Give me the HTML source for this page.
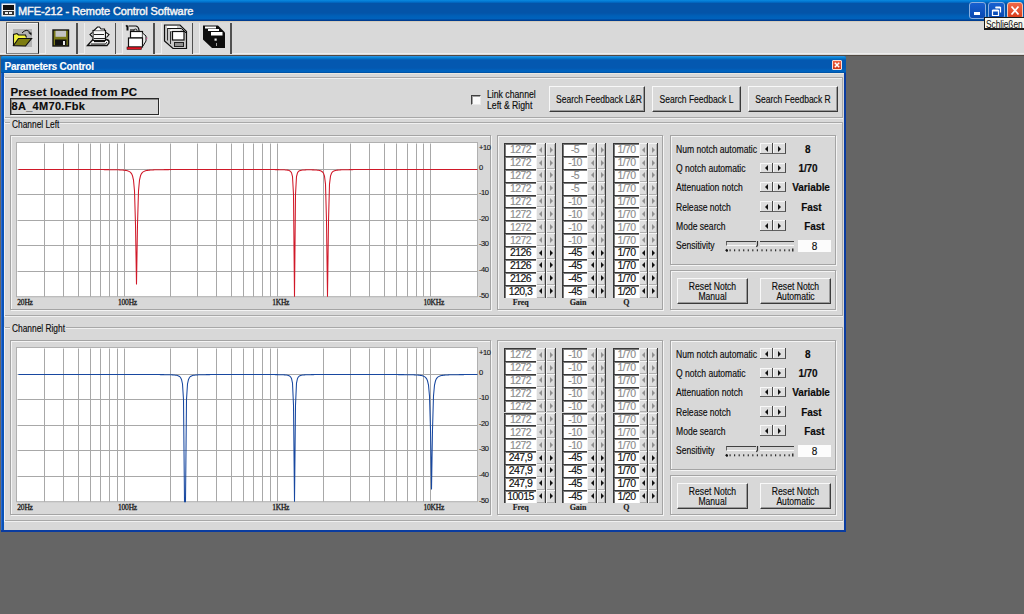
<!DOCTYPE html><html><head><meta charset="utf-8"><style>
*{box-sizing:border-box;margin:0;padding:0}
html,body{width:1024px;height:614px;overflow:hidden;background:#656565;font-family:"Liberation Sans",sans-serif;position:relative}
.abs{position:absolute}
.t{position:absolute;white-space:nowrap;font-size:10px;letter-spacing:-0.7px;color:#0c0c0c;line-height:10px;-webkit-text-stroke:0.15px currentColor}
.b{font-weight:bold}
.etch{position:absolute;border:1px solid #a4a4a4;box-shadow:inset 1px 1px 0 #f4f4f4, 1px 1px 0 #f4f4f4}
.btn{position:absolute;background:#dadada;border:1px solid;border-color:#f8f8f8 #3a3a3a #3a3a3a #f8f8f8;box-shadow:inset -1px -1px 0 #9a9a9a}
.sb{position:absolute;background:#dedede;border-right:1px solid #3c3c3c;box-shadow:inset 1px 1px 0 #f4f4f4, inset -1px -1px 0 #b0b0b0}
.ar{position:absolute;width:0;height:0;border-top:3px solid transparent;border-bottom:3px solid transparent}
</style></head><body>
<div class="abs" style="left:0;top:0;width:1024px;height:21px;background:linear-gradient(#0a8ae0 0px,#0070cc 2px,#0454a8 3.5px,#0454a8 13px,#0060b8 16px,#0062bc 19px,#003c90 20px,#003c90 21px)"></div>
<div class="t" style="left:18px;top:6px;font-size:11px;line-height:11px;color:#f4f4f4;letter-spacing:-0.1px;-webkit-text-stroke:0.45px #f4f4f4">MFE-212 - Remote Control Software</div>
<svg class="abs" style="left:1px;top:3px" width="15" height="14"><rect x="0.5" y="0.5" width="14" height="13" fill="#f0f0f0"/><rect x="2" y="2" width="11" height="5" fill="#111"/><rect x="2" y="8" width="11" height="4" fill="#333"/><rect x="4" y="9" width="3" height="2" fill="#eee"/><rect x="8" y="9" width="3" height="2" fill="#eee"/></svg>
<div class="abs" style="left:969px;top:1.5px;width:17px;height:17px;border:1px solid #8ab0e0;border-radius:3px;background:linear-gradient(#1860d0,#0848b0)"></div>
<div class="abs" style="left:988px;top:1.5px;width:17px;height:17px;border:1px solid #8ab0e0;border-radius:3px;background:linear-gradient(#1860d0,#0848b0)"></div>
<div class="abs" style="left:973.5px;top:12px;width:6px;height:3px;background:#fff"></div>
<svg class="abs" style="left:988px;top:1.5px" width="17" height="17"><path d="M4.5 8.5h6v5h-6z M7.5 5.5h5v5" fill="none" stroke="#fff" stroke-width="1.2"/><path d="M4.5 8.5h6M7.5 5.5h5" stroke="#fff" stroke-width="2"/></svg>
<div class="abs" style="left:1007px;top:1.5px;width:16px;height:17px;border:1px solid #f0c8b8;border-radius:3px;background:linear-gradient(#f06848,#d83c18)"></div>
<svg class="abs" style="left:1007px;top:1.5px" width="16" height="17"><path d="M4.5 4.5L11.5 12.5M11.5 4.5L4.5 12.5" stroke="#fff" stroke-width="1.8"/></svg>
<div class="abs" style="left:0;top:21px;width:1024px;height:34px;background:#d9d9d9;border-top:1px solid #d4ccbc"></div>
<div class="abs" style="left:0;top:53px;width:1024px;height:1px;background:#ececec"></div>
<div class="abs" style="left:0;top:54.5px;width:1024px;height:1px;background:#504840"></div>
<div class="abs" style="left:6px;top:22px;width:33px;height:32px;border:1px solid;border-color:#606060 #202020 #808080 #606060;background:#dedede;box-shadow:inset 1px 1px 0 #f4f4f4"></div>
<div class="abs" style="left:45.0px;top:23px;width:32px;height:31px;background:#dcdcdc;border-left:1px solid #eeeeee"></div>
<div class="abs" style="left:76.0px;top:23px;width:1.5px;height:31px;background:#505050"></div>
<div class="abs" style="left:83.5px;top:23px;width:32px;height:31px;background:#dcdcdc;border-left:1px solid #eeeeee"></div>
<div class="abs" style="left:114.5px;top:23px;width:1.5px;height:31px;background:#505050"></div>
<div class="abs" style="left:122.0px;top:23px;width:32px;height:31px;background:#dcdcdc;border-left:1px solid #eeeeee"></div>
<div class="abs" style="left:153.0px;top:23px;width:1.5px;height:31px;background:#505050"></div>
<div class="abs" style="left:160.5px;top:23px;width:32px;height:31px;background:#dcdcdc;border-left:1px solid #eeeeee"></div>
<div class="abs" style="left:191.5px;top:23px;width:1.5px;height:31px;background:#505050"></div>
<div class="abs" style="left:199.0px;top:23px;width:32px;height:31px;background:#dcdcdc;border-left:1px solid #eeeeee"></div>
<div class="abs" style="left:230.0px;top:23px;width:1.5px;height:31px;background:#505050"></div>
<svg class="abs" style="left:8px;top:24px" width="32" height="28">
<rect x="5" y="5" width="19" height="18" fill="#b4b4b4"/>
<path d="M5.5 21.5V10.5l3.5-1l1.5 1.5h7l1 2.5" fill="#f4f440" stroke="#101010" stroke-width="1.1"/>
<path d="M5.5 21.5L10.5 14.5H23.5L17.5 22z" fill="#7c7c10" stroke="#101010" stroke-width="1.2"/>
<path d="M14 9q4.5-5 8 -0.5" fill="none" stroke="#101010" stroke-width="1"/>
<path d="M20 8.5h3.5v3z" fill="#101010"/>
</svg>
<svg class="abs" style="left:52px;top:29px" width="18" height="18">
<rect x="1" y="1" width="15.5" height="16" fill="#7a7a18" stroke="#101010" stroke-width="1.4"/>
<rect x="3.5" y="1.8" width="10.5" height="6" fill="#c4c4c4"/>
<rect x="3" y="10.5" width="11.5" height="6" fill="#101010"/>
<rect x="11" y="12" width="2" height="4" fill="#e8e8e8"/>
</svg>
<svg class="abs" style="left:84px;top:24px" width="32" height="26">
<path d="M3.5 21.5L9 15.5H22.5q3 0.5 2.5 3.5l-2 2.5z" fill="#fff" stroke="#101010" stroke-width="1.3"/>
<path d="M7 20h14.5l1.5-2" fill="none" stroke="#101010" stroke-width="1"/>
<rect x="9" y="6.5" width="12.5" height="10" fill="#f8f8f8" stroke="#101010" stroke-width="1.2"/>
<path d="M10 6.5l3.5-3.5h2l1.5 2h3.5v1.5" fill="#fff" stroke="#101010" stroke-width="1.1"/>
<path d="M10 10.5h10M10 14.5h11" stroke="#202020" stroke-width="1"/>
<path d="M8.5 8.5l-2.5 2l2.5 2.5M22 8.5l3 2l-2.5 3" fill="#fff" stroke="#101010" stroke-width="1.1"/>
<path d="M10 17.5h11" stroke="#101010" stroke-width="1.3"/>
</svg>
<svg class="abs" style="left:122px;top:22px" width="32" height="30">
<path d="M5.5 3.5v5M4 4.5l1.5-1" stroke="#101010" stroke-width="2"/>
<path d="M7 4h7q2.5 0.5 3 4v1" fill="none" stroke="#101010" stroke-width="1.2"/>
<path d="M8 8h4" stroke="#101010" stroke-width="1.2"/>
<circle cx="13.5" cy="8.5" r="1.5" fill="none" stroke="#101010" stroke-width="1"/>
<rect x="8.5" y="9.5" width="12" height="6.5" fill="#fff" stroke="#101010" stroke-width="1.2"/>
<path d="M20.5 11l3.5 3v5l-3 5" fill="#f0f0f0" stroke="#101010" stroke-width="1"/>
<rect x="6.5" y="16" width="14" height="9" fill="#fff" stroke="#101010" stroke-width="1.2"/>
<rect x="5" y="25" width="14.5" height="2.5" fill="#e01020" stroke="#301010" stroke-width="0.6"/>
<path d="M24 17l1.5-1" stroke="#d0408a" stroke-width="1"/>
</svg>
<svg class="abs" style="left:160px;top:22px" width="32" height="30">
<path d="M4.5 3h15.5l6.5 6.5v17H13L4.5 19z" fill="#c8c8c8" stroke="#101010" stroke-width="1.2"/>
<path d="M8 6.5h13.5l5 5M11.5 9.5h11" fill="none" stroke="#101010" stroke-width="1"/>
<path d="M7.5 4.5v14M10.5 7.5v14.5" stroke="#303030" stroke-width="1"/>
<rect x="7" y="4" width="10" height="2" fill="#fff"/>
<rect x="10" y="7.3" width="10.5" height="2" fill="#fff"/>
<rect x="12.5" y="9.5" width="11.5" height="8.5" fill="#fff" stroke="#101010" stroke-width="1.2"/>
<rect x="14.5" y="20.5" width="9" height="4" fill="#909090" stroke="#202020" stroke-width="1"/>
</svg>
<svg class="abs" style="left:198px;top:22px" width="32" height="30">
<path d="M5 3.5h15l7 7v15.5H14L5 17.5z" fill="#0c0c0c"/>
<rect x="7" y="4.5" width="11" height="2" fill="#fff"/>
<rect x="10" y="7" width="11" height="2" fill="#fff"/>
<rect x="13" y="10" width="11.5" height="3.5" fill="#fff"/>
<rect x="16.5" y="16.5" width="2.2" height="2.2" fill="#f0f0f0"/>
<rect x="18" y="21" width="1" height="3" fill="#a0a0a0"/>
</svg>
<div class="abs" style="left:984px;top:17px;width:45px;height:13px;background:#f8f8f0;border:1px solid #1a1a1a;border-bottom-width:2px"></div>
<div class="t" style="left:986px;top:20px;font-size:10px;letter-spacing:-0.1px;transform:scaleX(0.84);transform-origin:0 0;-webkit-text-stroke:0">Schließen</div>
<div class="abs" style="left:1px;top:55.5px;width:845px;height:476.5px;background:#0852b8;border-radius:2px 2px 0 0"></div>
<div class="abs" style="left:1px;top:55.5px;width:845px;height:17.5px;background:linear-gradient(#3a90e0 0px,#0888d8 1.5px,#0458b0 4px,#0458b0 12px,#0064c0 15px,#0062bc 16px,#003880 17.5px);border-radius:2px 2px 0 0"></div>
<div class="abs" style="left:844px;top:73px;width:2px;height:458px;background:#0a3ca0"></div>
<div class="abs" style="left:1px;top:73px;width:1px;height:458px;background:#2a6ad0"></div>
<div class="abs" style="left:1px;top:530px;width:845px;height:2px;background:#0a3ca0"></div>
<div class="t b" style="left:4.5px;top:61.5px;color:#fff;font-size:10px;letter-spacing:-0.2px">Parameters Control</div>
<div class="abs" style="left:832px;top:60px;width:10px;height:10px;background:linear-gradient(#f06040,#d03818);border:1px solid #f8e0d8;border-radius:1px"></div>
<svg class="abs" style="left:832px;top:60px" width="10" height="10"><path d="M2.8 2.8L7.2 7.2M7.2 2.8L2.8 7.2" stroke="#fff" stroke-width="1.5"/></svg>
<div class="abs" style="left:4px;top:73px;width:840px;height:457px;background:#d8d8d8;border-top:1px solid #ebe8e0"></div>
<div class="abs" style="left:4px;top:77px;width:839px;height:1px;background:#a8a8a8"></div>
<div class="abs" style="left:4px;top:78px;width:839px;height:1px;background:#f0f0f0"></div>
<div class="abs" style="left:842px;top:77px;width:1px;height:40px;background:#a8a8a8"></div>
<div class="abs" style="left:4px;top:117px;width:839px;height:1px;background:#a8a8a8"></div>
<div class="abs" style="left:4px;top:118px;width:839px;height:1px;background:#f0f0f0"></div>
<div class="abs" style="left:4px;top:77px;width:1px;height:41px;background:#f0f0f0"></div>
<div class="t b" style="left:10.5px;top:87px;font-size:11.5px;line-height:11px;letter-spacing:0.16px;color:#0a0a0a">Preset loaded from PC</div>
<div class="abs" style="left:10px;top:98px;width:149px;height:17px;border:1px solid #2a2a2a;box-shadow:inset 1px 1px 0 #8a8a8a, 1px 1px 0 #f4f4f4;background:#d6d6d6"></div>
<div class="t b" style="left:11.5px;top:101px;font-size:11px;line-height:11px;letter-spacing:0.3px;color:#0a0a0a">8A_4M70.Fbk</div>
<div class="abs" style="left:471px;top:94.5px;width:10px;height:10px;background:#fafafa;border:1px solid;border-color:#404040 #e8e8e8 #e8e8e8 #404040;box-shadow:inset 1px 1px 0 #a0a0a0"></div>
<div class="t" style="left:486.5px;top:89.5px;letter-spacing:0;transform:scaleX(0.868);transform-origin:0 0">Link channel</div>
<div class="t" style="left:486.5px;top:100.7px;letter-spacing:0;transform:scaleX(0.868);transform-origin:0 0">Left &amp; Right</div>
<div class="btn" style="left:548.5px;top:86px;width:96px;height:26px"></div>
<div class="t" style="left:548.5px;top:94.5px;width:96px;text-align:center;letter-spacing:0;transform:scaleX(0.853);transform-origin:50% 0">Search Feedback L&amp;R</div>
<div class="btn" style="left:651.5px;top:86px;width:89px;height:26px"></div>
<div class="t" style="left:651.5px;top:94.5px;width:89px;text-align:center;letter-spacing:0;transform:scaleX(0.853);transform-origin:50% 0">Search Feedback L</div>
<div class="btn" style="left:747.5px;top:86px;width:90px;height:26px"></div>
<div class="t" style="left:747.5px;top:94.5px;width:90px;text-align:center;letter-spacing:0;transform:scaleX(0.853);transform-origin:50% 0">Search Feedback R</div>
<div class="abs" style="left:4px;top:122px;width:839px;height:1px;background:#a8a8a8"></div>
<div class="abs" style="left:4px;top:123px;width:839px;height:1px;background:#f0f0f0"></div>
<div class="abs" style="left:4px;top:315px;width:839px;height:1px;background:#a8a8a8"></div>
<div class="abs" style="left:4px;top:316px;width:839px;height:1px;background:#f0f0f0"></div>
<div class="abs" style="left:842px;top:122px;width:1px;height:194px;background:#a8a8a8"></div>
<div class="abs" style="left:4px;top:122px;width:1px;height:195px;background:#f0f0f0"></div>
<div class="abs" style="left:10px;top:118px;width:50px;height:10px;background:#d8d8d8"></div>
<div class="t" style="left:11.5px;top:119.5px;letter-spacing:0;transform:scaleX(0.836);transform-origin:0 0">Channel Left</div>
<div class="etch" style="left:10px;top:135px;width:481px;height:175px"></div>
<svg class="abs" style="left:0;top:0" width="1024" height="614"><rect x="16.5" y="142.5" width="461" height="154.2" fill="#fff" stroke="#b0b0b0" stroke-width="1"/><line x1="44.5" y1="143.5" x2="44.5" y2="296.7" stroke="#a8a8a8" stroke-width="1"/><line x1="63.5" y1="143.5" x2="63.5" y2="296.7" stroke="#a8a8a8" stroke-width="1"/><line x1="78.5" y1="143.5" x2="78.5" y2="296.7" stroke="#a8a8a8" stroke-width="1"/><line x1="90.5" y1="143.5" x2="90.5" y2="296.7" stroke="#a8a8a8" stroke-width="1"/><line x1="100.5" y1="143.5" x2="100.5" y2="296.7" stroke="#a8a8a8" stroke-width="1"/><line x1="109.5" y1="143.5" x2="109.5" y2="296.7" stroke="#a8a8a8" stroke-width="1"/><line x1="117.5" y1="143.5" x2="117.5" y2="296.7" stroke="#a8a8a8" stroke-width="1"/><line x1="124.5" y1="143.5" x2="124.5" y2="296.7" stroke="#a8a8a8" stroke-width="1"/><line x1="170.5" y1="143.5" x2="170.5" y2="296.7" stroke="#a8a8a8" stroke-width="1"/><line x1="197.5" y1="143.5" x2="197.5" y2="296.7" stroke="#a8a8a8" stroke-width="1"/><line x1="216.5" y1="143.5" x2="216.5" y2="296.7" stroke="#a8a8a8" stroke-width="1"/><line x1="231.5" y1="143.5" x2="231.5" y2="296.7" stroke="#a8a8a8" stroke-width="1"/><line x1="243.5" y1="143.5" x2="243.5" y2="296.7" stroke="#a8a8a8" stroke-width="1"/><line x1="253.5" y1="143.5" x2="253.5" y2="296.7" stroke="#a8a8a8" stroke-width="1"/><line x1="262.5" y1="143.5" x2="262.5" y2="296.7" stroke="#a8a8a8" stroke-width="1"/><line x1="270.5" y1="143.5" x2="270.5" y2="296.7" stroke="#a8a8a8" stroke-width="1"/><line x1="277.5" y1="143.5" x2="277.5" y2="296.7" stroke="#a8a8a8" stroke-width="1"/><line x1="323.5" y1="143.5" x2="323.5" y2="296.7" stroke="#a8a8a8" stroke-width="1"/><line x1="350.5" y1="143.5" x2="350.5" y2="296.7" stroke="#a8a8a8" stroke-width="1"/><line x1="369.5" y1="143.5" x2="369.5" y2="296.7" stroke="#a8a8a8" stroke-width="1"/><line x1="384.5" y1="143.5" x2="384.5" y2="296.7" stroke="#a8a8a8" stroke-width="1"/><line x1="396.5" y1="143.5" x2="396.5" y2="296.7" stroke="#a8a8a8" stroke-width="1"/><line x1="407.5" y1="143.5" x2="407.5" y2="296.7" stroke="#a8a8a8" stroke-width="1"/><line x1="416.5" y1="143.5" x2="416.5" y2="296.7" stroke="#a8a8a8" stroke-width="1"/><line x1="423.5" y1="143.5" x2="423.5" y2="296.7" stroke="#a8a8a8" stroke-width="1"/><line x1="430.5" y1="143.5" x2="430.5" y2="296.7" stroke="#a8a8a8" stroke-width="1"/><line x1="17.5" y1="169.5" x2="477.5" y2="169.5" stroke="#a8a8a8" stroke-width="1"/><line x1="17.5" y1="194.5" x2="477.5" y2="194.5" stroke="#a8a8a8" stroke-width="1"/><line x1="17.5" y1="220.5" x2="477.5" y2="220.5" stroke="#a8a8a8" stroke-width="1"/><line x1="17.5" y1="245.5" x2="477.5" y2="245.5" stroke="#a8a8a8" stroke-width="1"/><line x1="17.5" y1="271.5" x2="477.5" y2="271.5" stroke="#a8a8a8" stroke-width="1"/><polyline points="18.50,169.51 19.50,169.51 20.50,169.51 21.50,169.51 22.50,169.51 23.50,169.51 24.50,169.51 25.50,169.51 26.50,169.51 27.50,169.51 28.50,169.51 29.50,169.51 30.50,169.51 31.50,169.51 32.50,169.51 33.50,169.51 34.50,169.51 35.50,169.51 36.50,169.51 37.50,169.51 38.50,169.51 39.50,169.51 40.50,169.51 41.50,169.51 42.50,169.51 43.50,169.51 44.50,169.51 45.50,169.51 46.50,169.51 47.50,169.51 48.50,169.51 49.50,169.52 50.50,169.52 51.50,169.52 52.50,169.52 53.50,169.52 54.50,169.52 55.50,169.52 56.50,169.52 57.50,169.52 58.50,169.52 59.50,169.52 60.50,169.52 61.50,169.52 62.50,169.52 63.50,169.52 64.50,169.52 65.50,169.52 66.50,169.52 67.50,169.52 68.50,169.52 69.50,169.53 70.50,169.53 71.50,169.53 72.50,169.53 73.50,169.53 74.50,169.53 75.50,169.53 76.50,169.53 77.50,169.53 78.50,169.53 79.50,169.53 80.50,169.54 81.50,169.54 82.50,169.54 83.50,169.54 84.50,169.54 85.50,169.54 86.50,169.54 87.50,169.55 88.50,169.55 89.50,169.55 90.50,169.55 91.50,169.55 92.50,169.56 93.50,169.56 94.50,169.56 95.50,169.56 96.50,169.57 97.50,169.57 98.50,169.58 99.50,169.58 100.50,169.58 101.50,169.59 102.50,169.59 103.50,169.60 104.50,169.61 105.50,169.61 106.50,169.62 107.50,169.63 108.50,169.64 109.50,169.65 110.50,169.66 111.50,169.67 112.50,169.69 113.50,169.70 114.50,169.72 115.50,169.74 116.50,169.77 117.50,169.79 118.50,169.83 119.50,169.87 120.50,169.91 121.50,169.97 122.50,170.04 123.50,170.13 124.50,170.23 125.50,170.37 126.50,170.55 127.50,170.80 128.50,171.13 129.50,171.62 130.50,172.37 131.50,173.59 132.50,175.76 133.50,180.18 134.50,191.02 135.50,224.61 136.50,284.40 137.50,224.61 138.50,191.02 139.50,180.18 140.50,175.76 141.50,173.59 142.50,172.37 143.50,171.62 144.50,171.13 145.50,170.80 146.50,170.55 147.50,170.37 148.50,170.23 149.50,170.13 150.50,170.04 151.50,169.97 152.50,169.92 153.50,169.87 154.50,169.83 155.50,169.80 156.50,169.77 157.50,169.74 158.50,169.72 159.50,169.70 160.50,169.69 161.50,169.67 162.50,169.66 163.50,169.65 164.50,169.64 165.50,169.63 166.50,169.62 167.50,169.61 168.50,169.61 169.50,169.60 170.50,169.60 171.50,169.59 172.50,169.59 173.50,169.58 174.50,169.58 175.50,169.57 176.50,169.57 177.50,169.57 178.50,169.56 179.50,169.56 180.50,169.56 181.50,169.56 182.50,169.56 183.50,169.55 184.50,169.55 185.50,169.55 186.50,169.55 187.50,169.55 188.50,169.54 189.50,169.54 190.50,169.54 191.50,169.54 192.50,169.54 193.50,169.54 194.50,169.54 195.50,169.54 196.50,169.54 197.50,169.54 198.50,169.53 199.50,169.53 200.50,169.53 201.50,169.53 202.50,169.53 203.50,169.53 204.50,169.53 205.50,169.53 206.50,169.53 207.50,169.53 208.50,169.53 209.50,169.53 210.50,169.53 211.50,169.53 212.50,169.53 213.50,169.53 214.50,169.53 215.50,169.53 216.50,169.53 217.50,169.53 218.50,169.53 219.50,169.53 220.50,169.53 221.50,169.53 222.50,169.53 223.50,169.53 224.50,169.53 225.50,169.53 226.50,169.53 227.50,169.53 228.50,169.53 229.50,169.53 230.50,169.53 231.50,169.53 232.50,169.53 233.50,169.53 234.50,169.53 235.50,169.53 236.50,169.53 237.50,169.53 238.50,169.53 239.50,169.53 240.50,169.53 241.50,169.53 242.50,169.53 243.50,169.53 244.50,169.53 245.50,169.53 246.50,169.53 247.50,169.53 248.50,169.53 249.50,169.53 250.50,169.53 251.50,169.53 252.50,169.54 253.50,169.54 254.50,169.54 255.50,169.54 256.50,169.54 257.50,169.54 258.50,169.54 259.50,169.54 260.50,169.55 261.50,169.55 262.50,169.55 263.50,169.55 264.50,169.55 265.50,169.56 266.50,169.56 267.50,169.56 268.50,169.57 269.50,169.57 270.50,169.58 271.50,169.58 272.50,169.59 273.50,169.59 274.50,169.60 275.50,169.61 276.50,169.62 277.50,169.63 278.50,169.64 279.50,169.66 280.50,169.68 281.50,169.71 282.50,169.74 283.50,169.78 284.50,169.83 285.50,169.90 286.50,170.00 287.50,170.14 288.50,170.35 289.50,170.71 290.50,171.36 291.50,172.74 292.50,176.56 293.50,194.44 294.50,296.70 295.50,194.45 296.50,176.58 297.50,172.76 298.50,171.39 299.50,170.74 300.50,170.40 301.50,170.19 302.50,170.06 303.50,169.97 304.50,169.91 305.50,169.87 306.50,169.84 307.50,169.83 308.50,169.82 309.50,169.82 310.50,169.83 311.50,169.84 312.50,169.86 313.50,169.89 314.50,169.94 315.50,169.99 316.50,170.07 317.50,170.17 318.50,170.30 319.50,170.50 320.50,170.78 321.50,171.22 322.50,171.96 323.50,173.30 324.50,176.16 325.50,184.09 326.50,221.22 327.50,296.70 328.50,221.22 329.50,184.09 330.50,176.15 331.50,173.28 332.50,171.94 333.50,171.20 334.50,170.76 335.50,170.47 336.50,170.27 337.50,170.13 338.50,170.02 339.50,169.94 340.50,169.88 341.50,169.83 342.50,169.79 343.50,169.75 344.50,169.72 345.50,169.70 346.50,169.68 347.50,169.66 348.50,169.65 349.50,169.64 350.50,169.63 351.50,169.62 352.50,169.61 353.50,169.60 354.50,169.59 355.50,169.59 356.50,169.58 357.50,169.58 358.50,169.57 359.50,169.57 360.50,169.56 361.50,169.56 362.50,169.56 363.50,169.56 364.50,169.55 365.50,169.55 366.50,169.55 367.50,169.55 368.50,169.54 369.50,169.54 370.50,169.54 371.50,169.54 372.50,169.54 373.50,169.54 374.50,169.53 375.50,169.53 376.50,169.53 377.50,169.53 378.50,169.53 379.50,169.53 380.50,169.53 381.50,169.53 382.50,169.53 383.50,169.52 384.50,169.52 385.50,169.52 386.50,169.52 387.50,169.52 388.50,169.52 389.50,169.52 390.50,169.52 391.50,169.52 392.50,169.52 393.50,169.52 394.50,169.52 395.50,169.52 396.50,169.52 397.50,169.52 398.50,169.52 399.50,169.52 400.50,169.52 401.50,169.52 402.50,169.51 403.50,169.51 404.50,169.51 405.50,169.51 406.50,169.51 407.50,169.51 408.50,169.51 409.50,169.51 410.50,169.51 411.50,169.51 412.50,169.51 413.50,169.51 414.50,169.51 415.50,169.51 416.50,169.51 417.50,169.51 418.50,169.51 419.50,169.51 420.50,169.51 421.50,169.51 422.50,169.51 423.50,169.51 424.50,169.51 425.50,169.51 426.50,169.51 427.50,169.51 428.50,169.51 429.50,169.51 430.50,169.51 431.50,169.51 432.50,169.51 433.50,169.51 434.50,169.51 435.50,169.51 436.50,169.51 437.50,169.51 438.50,169.51 439.50,169.51 440.50,169.51 441.50,169.51 442.50,169.51 443.50,169.51 444.50,169.51 445.50,169.51 446.50,169.51 447.50,169.51 448.50,169.51 449.50,169.51 450.50,169.51 451.50,169.51 452.50,169.51 453.50,169.51 454.50,169.51 455.50,169.51 456.50,169.51 457.50,169.51 458.50,169.51 459.50,169.51 460.50,169.51 461.50,169.51 462.50,169.51 463.50,169.51 464.50,169.51 465.50,169.51 466.50,169.51 467.50,169.51 468.50,169.50 469.50,169.50 470.50,169.50 471.50,169.50 472.50,169.50 473.50,169.50 474.50,169.50 475.50,169.50 476.50,169.50 477.50,169.50" fill="none" stroke="#d01828" stroke-width="1.05"/></svg>
<div class="t" style="left:479px;top:144.4px;font-size:7.5px;line-height:7px;letter-spacing:-0.4px;color:#181818">+10</div>
<div class="t" style="left:479px;top:163.9px;font-size:7.5px;line-height:7px;letter-spacing:-0.4px;color:#181818">0</div>
<div class="t" style="left:479px;top:189.3px;font-size:7.5px;line-height:7px;letter-spacing:-0.4px;color:#181818">-10</div>
<div class="t" style="left:479px;top:215.0px;font-size:7.5px;line-height:7px;letter-spacing:-0.4px;color:#181818">-20</div>
<div class="t" style="left:479px;top:240.3px;font-size:7.5px;line-height:7px;letter-spacing:-0.4px;color:#181818">-30</div>
<div class="t" style="left:479px;top:266.0px;font-size:7.5px;line-height:7px;letter-spacing:-0.4px;color:#181818">-40</div>
<div class="t" style="left:479px;top:291.5px;font-size:7.5px;line-height:7px;letter-spacing:-0.4px;color:#181818">-50</div>
<div class="t" style="left:17.3px;width:30px;text-align:left;top:299px;font-size:7.5px;line-height:8px;letter-spacing:-0.2px;color:#202020;font-family:'Liberation Serif';-webkit-text-stroke:0.3px #202020">20Hz</div>
<div class="t" style="left:115.5px;width:24px;text-align:center;top:299px;font-size:7.5px;line-height:8px;letter-spacing:-0.2px;color:#202020;font-family:'Liberation Serif';-webkit-text-stroke:0.3px #202020">100Hz</div>
<div class="t" style="left:268.7px;width:24px;text-align:center;top:299px;font-size:7.5px;line-height:8px;letter-spacing:-0.2px;color:#202020;font-family:'Liberation Serif';-webkit-text-stroke:0.3px #202020">1KHz</div>
<div class="t" style="left:421.8px;width:24px;text-align:center;top:299px;font-size:7.5px;line-height:8px;letter-spacing:-0.2px;color:#202020;font-family:'Liberation Serif';-webkit-text-stroke:0.3px #202020">10KHz</div>
<div class="etch" style="left:497px;top:135px;width:166px;height:175px"></div>
<div class="abs" style="left:504px;top:143.1px;width:31.5px;height:12.9px;background:#fff;border-top:1px solid #383838;border-left:1px solid #383838;box-shadow:inset 1px 1px 0 #7a7a7a"></div>
<div class="t" style="left:505px;top:144.4px;width:31px;text-align:center;color:#8c8c8c;font-size:10.5px;line-height:10px;letter-spacing:-0.55px">1272</div>
<div class="sb" style="left:535.5px;top:143.1px;width:10.0px;height:12.9px"></div>
<div class="ar" style="left:539.0px;top:146.6px;border-right:3px solid #909090"></div>
<div class="sb" style="left:545.5px;top:143.1px;width:10.0px;height:12.9px"></div>
<div class="ar" style="left:549.5px;top:146.6px;border-left:3px solid #909090"></div>
<div class="abs" style="left:561.5px;top:143.1px;width:25.5px;height:12.9px;background:#fff;border-top:1px solid #383838;border-left:1px solid #383838;box-shadow:inset 1px 1px 0 #7a7a7a"></div>
<div class="t" style="left:562.5px;top:144.4px;width:25px;text-align:center;color:#8c8c8c;font-size:10.5px;line-height:10px;letter-spacing:-0.55px">-5</div>
<div class="sb" style="left:587.0px;top:143.1px;width:9.7px;height:12.9px"></div>
<div class="ar" style="left:590.5px;top:146.6px;border-right:3px solid #909090"></div>
<div class="sb" style="left:596.7px;top:143.1px;width:9.7px;height:12.9px"></div>
<div class="ar" style="left:600.7px;top:146.6px;border-left:3px solid #909090"></div>
<div class="abs" style="left:613px;top:143.1px;width:25.5px;height:12.9px;background:#fff;border-top:1px solid #383838;border-left:1px solid #383838;box-shadow:inset 1px 1px 0 #7a7a7a"></div>
<div class="t" style="left:614px;top:144.4px;width:25px;text-align:center;color:#8c8c8c;font-size:10.5px;line-height:10px;letter-spacing:-0.55px">1/70</div>
<div class="sb" style="left:638.5px;top:143.1px;width:9.7px;height:12.9px"></div>
<div class="ar" style="left:642.0px;top:146.6px;border-right:3px solid #909090"></div>
<div class="sb" style="left:648.2px;top:143.1px;width:9.7px;height:12.9px"></div>
<div class="ar" style="left:652.2px;top:146.6px;border-left:3px solid #909090"></div>
<div class="abs" style="left:504px;top:156.0px;width:31.5px;height:12.9px;background:#fff;border-top:1px solid #383838;border-left:1px solid #383838;box-shadow:inset 1px 1px 0 #7a7a7a"></div>
<div class="t" style="left:505px;top:157.3px;width:31px;text-align:center;color:#8c8c8c;font-size:10.5px;line-height:10px;letter-spacing:-0.55px">1272</div>
<div class="sb" style="left:535.5px;top:156.0px;width:10.0px;height:12.9px"></div>
<div class="ar" style="left:539.0px;top:159.5px;border-right:3px solid #909090"></div>
<div class="sb" style="left:545.5px;top:156.0px;width:10.0px;height:12.9px"></div>
<div class="ar" style="left:549.5px;top:159.5px;border-left:3px solid #909090"></div>
<div class="abs" style="left:561.5px;top:156.0px;width:25.5px;height:12.9px;background:#fff;border-top:1px solid #383838;border-left:1px solid #383838;box-shadow:inset 1px 1px 0 #7a7a7a"></div>
<div class="t" style="left:562.5px;top:157.3px;width:25px;text-align:center;color:#8c8c8c;font-size:10.5px;line-height:10px;letter-spacing:-0.55px">-10</div>
<div class="sb" style="left:587.0px;top:156.0px;width:9.7px;height:12.9px"></div>
<div class="ar" style="left:590.5px;top:159.5px;border-right:3px solid #909090"></div>
<div class="sb" style="left:596.7px;top:156.0px;width:9.7px;height:12.9px"></div>
<div class="ar" style="left:600.7px;top:159.5px;border-left:3px solid #909090"></div>
<div class="abs" style="left:613px;top:156.0px;width:25.5px;height:12.9px;background:#fff;border-top:1px solid #383838;border-left:1px solid #383838;box-shadow:inset 1px 1px 0 #7a7a7a"></div>
<div class="t" style="left:614px;top:157.3px;width:25px;text-align:center;color:#8c8c8c;font-size:10.5px;line-height:10px;letter-spacing:-0.55px">1/70</div>
<div class="sb" style="left:638.5px;top:156.0px;width:9.7px;height:12.9px"></div>
<div class="ar" style="left:642.0px;top:159.5px;border-right:3px solid #909090"></div>
<div class="sb" style="left:648.2px;top:156.0px;width:9.7px;height:12.9px"></div>
<div class="ar" style="left:652.2px;top:159.5px;border-left:3px solid #909090"></div>
<div class="abs" style="left:504px;top:168.8px;width:31.5px;height:12.9px;background:#fff;border-top:1px solid #383838;border-left:1px solid #383838;box-shadow:inset 1px 1px 0 #7a7a7a"></div>
<div class="t" style="left:505px;top:170.1px;width:31px;text-align:center;color:#8c8c8c;font-size:10.5px;line-height:10px;letter-spacing:-0.55px">1272</div>
<div class="sb" style="left:535.5px;top:168.8px;width:10.0px;height:12.9px"></div>
<div class="ar" style="left:539.0px;top:172.3px;border-right:3px solid #909090"></div>
<div class="sb" style="left:545.5px;top:168.8px;width:10.0px;height:12.9px"></div>
<div class="ar" style="left:549.5px;top:172.3px;border-left:3px solid #909090"></div>
<div class="abs" style="left:561.5px;top:168.8px;width:25.5px;height:12.9px;background:#fff;border-top:1px solid #383838;border-left:1px solid #383838;box-shadow:inset 1px 1px 0 #7a7a7a"></div>
<div class="t" style="left:562.5px;top:170.1px;width:25px;text-align:center;color:#8c8c8c;font-size:10.5px;line-height:10px;letter-spacing:-0.55px">-5</div>
<div class="sb" style="left:587.0px;top:168.8px;width:9.7px;height:12.9px"></div>
<div class="ar" style="left:590.5px;top:172.3px;border-right:3px solid #909090"></div>
<div class="sb" style="left:596.7px;top:168.8px;width:9.7px;height:12.9px"></div>
<div class="ar" style="left:600.7px;top:172.3px;border-left:3px solid #909090"></div>
<div class="abs" style="left:613px;top:168.8px;width:25.5px;height:12.9px;background:#fff;border-top:1px solid #383838;border-left:1px solid #383838;box-shadow:inset 1px 1px 0 #7a7a7a"></div>
<div class="t" style="left:614px;top:170.1px;width:25px;text-align:center;color:#8c8c8c;font-size:10.5px;line-height:10px;letter-spacing:-0.55px">1/70</div>
<div class="sb" style="left:638.5px;top:168.8px;width:9.7px;height:12.9px"></div>
<div class="ar" style="left:642.0px;top:172.3px;border-right:3px solid #909090"></div>
<div class="sb" style="left:648.2px;top:168.8px;width:9.7px;height:12.9px"></div>
<div class="ar" style="left:652.2px;top:172.3px;border-left:3px solid #909090"></div>
<div class="abs" style="left:504px;top:181.7px;width:31.5px;height:12.9px;background:#fff;border-top:1px solid #383838;border-left:1px solid #383838;box-shadow:inset 1px 1px 0 #7a7a7a"></div>
<div class="t" style="left:505px;top:183.0px;width:31px;text-align:center;color:#8c8c8c;font-size:10.5px;line-height:10px;letter-spacing:-0.55px">1272</div>
<div class="sb" style="left:535.5px;top:181.7px;width:10.0px;height:12.9px"></div>
<div class="ar" style="left:539.0px;top:185.2px;border-right:3px solid #909090"></div>
<div class="sb" style="left:545.5px;top:181.7px;width:10.0px;height:12.9px"></div>
<div class="ar" style="left:549.5px;top:185.2px;border-left:3px solid #909090"></div>
<div class="abs" style="left:561.5px;top:181.7px;width:25.5px;height:12.9px;background:#fff;border-top:1px solid #383838;border-left:1px solid #383838;box-shadow:inset 1px 1px 0 #7a7a7a"></div>
<div class="t" style="left:562.5px;top:183.0px;width:25px;text-align:center;color:#8c8c8c;font-size:10.5px;line-height:10px;letter-spacing:-0.55px">-5</div>
<div class="sb" style="left:587.0px;top:181.7px;width:9.7px;height:12.9px"></div>
<div class="ar" style="left:590.5px;top:185.2px;border-right:3px solid #909090"></div>
<div class="sb" style="left:596.7px;top:181.7px;width:9.7px;height:12.9px"></div>
<div class="ar" style="left:600.7px;top:185.2px;border-left:3px solid #909090"></div>
<div class="abs" style="left:613px;top:181.7px;width:25.5px;height:12.9px;background:#fff;border-top:1px solid #383838;border-left:1px solid #383838;box-shadow:inset 1px 1px 0 #7a7a7a"></div>
<div class="t" style="left:614px;top:183.0px;width:25px;text-align:center;color:#8c8c8c;font-size:10.5px;line-height:10px;letter-spacing:-0.55px">1/70</div>
<div class="sb" style="left:638.5px;top:181.7px;width:9.7px;height:12.9px"></div>
<div class="ar" style="left:642.0px;top:185.2px;border-right:3px solid #909090"></div>
<div class="sb" style="left:648.2px;top:181.7px;width:9.7px;height:12.9px"></div>
<div class="ar" style="left:652.2px;top:185.2px;border-left:3px solid #909090"></div>
<div class="abs" style="left:504px;top:194.6px;width:31.5px;height:12.9px;background:#fff;border-top:1px solid #383838;border-left:1px solid #383838;box-shadow:inset 1px 1px 0 #7a7a7a"></div>
<div class="t" style="left:505px;top:195.9px;width:31px;text-align:center;color:#8c8c8c;font-size:10.5px;line-height:10px;letter-spacing:-0.55px">1272</div>
<div class="sb" style="left:535.5px;top:194.6px;width:10.0px;height:12.9px"></div>
<div class="ar" style="left:539.0px;top:198.1px;border-right:3px solid #909090"></div>
<div class="sb" style="left:545.5px;top:194.6px;width:10.0px;height:12.9px"></div>
<div class="ar" style="left:549.5px;top:198.1px;border-left:3px solid #909090"></div>
<div class="abs" style="left:561.5px;top:194.6px;width:25.5px;height:12.9px;background:#fff;border-top:1px solid #383838;border-left:1px solid #383838;box-shadow:inset 1px 1px 0 #7a7a7a"></div>
<div class="t" style="left:562.5px;top:195.9px;width:25px;text-align:center;color:#8c8c8c;font-size:10.5px;line-height:10px;letter-spacing:-0.55px">-10</div>
<div class="sb" style="left:587.0px;top:194.6px;width:9.7px;height:12.9px"></div>
<div class="ar" style="left:590.5px;top:198.1px;border-right:3px solid #909090"></div>
<div class="sb" style="left:596.7px;top:194.6px;width:9.7px;height:12.9px"></div>
<div class="ar" style="left:600.7px;top:198.1px;border-left:3px solid #909090"></div>
<div class="abs" style="left:613px;top:194.6px;width:25.5px;height:12.9px;background:#fff;border-top:1px solid #383838;border-left:1px solid #383838;box-shadow:inset 1px 1px 0 #7a7a7a"></div>
<div class="t" style="left:614px;top:195.9px;width:25px;text-align:center;color:#8c8c8c;font-size:10.5px;line-height:10px;letter-spacing:-0.55px">1/70</div>
<div class="sb" style="left:638.5px;top:194.6px;width:9.7px;height:12.9px"></div>
<div class="ar" style="left:642.0px;top:198.1px;border-right:3px solid #909090"></div>
<div class="sb" style="left:648.2px;top:194.6px;width:9.7px;height:12.9px"></div>
<div class="ar" style="left:652.2px;top:198.1px;border-left:3px solid #909090"></div>
<div class="abs" style="left:504px;top:207.4px;width:31.5px;height:12.9px;background:#fff;border-top:1px solid #383838;border-left:1px solid #383838;box-shadow:inset 1px 1px 0 #7a7a7a"></div>
<div class="t" style="left:505px;top:208.8px;width:31px;text-align:center;color:#8c8c8c;font-size:10.5px;line-height:10px;letter-spacing:-0.55px">1272</div>
<div class="sb" style="left:535.5px;top:207.4px;width:10.0px;height:12.9px"></div>
<div class="ar" style="left:539.0px;top:210.9px;border-right:3px solid #909090"></div>
<div class="sb" style="left:545.5px;top:207.4px;width:10.0px;height:12.9px"></div>
<div class="ar" style="left:549.5px;top:210.9px;border-left:3px solid #909090"></div>
<div class="abs" style="left:561.5px;top:207.4px;width:25.5px;height:12.9px;background:#fff;border-top:1px solid #383838;border-left:1px solid #383838;box-shadow:inset 1px 1px 0 #7a7a7a"></div>
<div class="t" style="left:562.5px;top:208.8px;width:25px;text-align:center;color:#8c8c8c;font-size:10.5px;line-height:10px;letter-spacing:-0.55px">-10</div>
<div class="sb" style="left:587.0px;top:207.4px;width:9.7px;height:12.9px"></div>
<div class="ar" style="left:590.5px;top:210.9px;border-right:3px solid #909090"></div>
<div class="sb" style="left:596.7px;top:207.4px;width:9.7px;height:12.9px"></div>
<div class="ar" style="left:600.7px;top:210.9px;border-left:3px solid #909090"></div>
<div class="abs" style="left:613px;top:207.4px;width:25.5px;height:12.9px;background:#fff;border-top:1px solid #383838;border-left:1px solid #383838;box-shadow:inset 1px 1px 0 #7a7a7a"></div>
<div class="t" style="left:614px;top:208.8px;width:25px;text-align:center;color:#8c8c8c;font-size:10.5px;line-height:10px;letter-spacing:-0.55px">1/70</div>
<div class="sb" style="left:638.5px;top:207.4px;width:9.7px;height:12.9px"></div>
<div class="ar" style="left:642.0px;top:210.9px;border-right:3px solid #909090"></div>
<div class="sb" style="left:648.2px;top:207.4px;width:9.7px;height:12.9px"></div>
<div class="ar" style="left:652.2px;top:210.9px;border-left:3px solid #909090"></div>
<div class="abs" style="left:504px;top:220.3px;width:31.5px;height:12.9px;background:#fff;border-top:1px solid #383838;border-left:1px solid #383838;box-shadow:inset 1px 1px 0 #7a7a7a"></div>
<div class="t" style="left:505px;top:221.6px;width:31px;text-align:center;color:#8c8c8c;font-size:10.5px;line-height:10px;letter-spacing:-0.55px">1272</div>
<div class="sb" style="left:535.5px;top:220.3px;width:10.0px;height:12.9px"></div>
<div class="ar" style="left:539.0px;top:223.8px;border-right:3px solid #909090"></div>
<div class="sb" style="left:545.5px;top:220.3px;width:10.0px;height:12.9px"></div>
<div class="ar" style="left:549.5px;top:223.8px;border-left:3px solid #909090"></div>
<div class="abs" style="left:561.5px;top:220.3px;width:25.5px;height:12.9px;background:#fff;border-top:1px solid #383838;border-left:1px solid #383838;box-shadow:inset 1px 1px 0 #7a7a7a"></div>
<div class="t" style="left:562.5px;top:221.6px;width:25px;text-align:center;color:#8c8c8c;font-size:10.5px;line-height:10px;letter-spacing:-0.55px">-10</div>
<div class="sb" style="left:587.0px;top:220.3px;width:9.7px;height:12.9px"></div>
<div class="ar" style="left:590.5px;top:223.8px;border-right:3px solid #909090"></div>
<div class="sb" style="left:596.7px;top:220.3px;width:9.7px;height:12.9px"></div>
<div class="ar" style="left:600.7px;top:223.8px;border-left:3px solid #909090"></div>
<div class="abs" style="left:613px;top:220.3px;width:25.5px;height:12.9px;background:#fff;border-top:1px solid #383838;border-left:1px solid #383838;box-shadow:inset 1px 1px 0 #7a7a7a"></div>
<div class="t" style="left:614px;top:221.6px;width:25px;text-align:center;color:#8c8c8c;font-size:10.5px;line-height:10px;letter-spacing:-0.55px">1/70</div>
<div class="sb" style="left:638.5px;top:220.3px;width:9.7px;height:12.9px"></div>
<div class="ar" style="left:642.0px;top:223.8px;border-right:3px solid #909090"></div>
<div class="sb" style="left:648.2px;top:220.3px;width:9.7px;height:12.9px"></div>
<div class="ar" style="left:652.2px;top:223.8px;border-left:3px solid #909090"></div>
<div class="abs" style="left:504px;top:233.2px;width:31.5px;height:12.9px;background:#fff;border-top:1px solid #383838;border-left:1px solid #383838;box-shadow:inset 1px 1px 0 #7a7a7a"></div>
<div class="t" style="left:505px;top:234.5px;width:31px;text-align:center;color:#8c8c8c;font-size:10.5px;line-height:10px;letter-spacing:-0.55px">1272</div>
<div class="sb" style="left:535.5px;top:233.2px;width:10.0px;height:12.9px"></div>
<div class="ar" style="left:539.0px;top:236.7px;border-right:3px solid #909090"></div>
<div class="sb" style="left:545.5px;top:233.2px;width:10.0px;height:12.9px"></div>
<div class="ar" style="left:549.5px;top:236.7px;border-left:3px solid #909090"></div>
<div class="abs" style="left:561.5px;top:233.2px;width:25.5px;height:12.9px;background:#fff;border-top:1px solid #383838;border-left:1px solid #383838;box-shadow:inset 1px 1px 0 #7a7a7a"></div>
<div class="t" style="left:562.5px;top:234.5px;width:25px;text-align:center;color:#8c8c8c;font-size:10.5px;line-height:10px;letter-spacing:-0.55px">-10</div>
<div class="sb" style="left:587.0px;top:233.2px;width:9.7px;height:12.9px"></div>
<div class="ar" style="left:590.5px;top:236.7px;border-right:3px solid #909090"></div>
<div class="sb" style="left:596.7px;top:233.2px;width:9.7px;height:12.9px"></div>
<div class="ar" style="left:600.7px;top:236.7px;border-left:3px solid #909090"></div>
<div class="abs" style="left:613px;top:233.2px;width:25.5px;height:12.9px;background:#fff;border-top:1px solid #383838;border-left:1px solid #383838;box-shadow:inset 1px 1px 0 #7a7a7a"></div>
<div class="t" style="left:614px;top:234.5px;width:25px;text-align:center;color:#8c8c8c;font-size:10.5px;line-height:10px;letter-spacing:-0.55px">1/70</div>
<div class="sb" style="left:638.5px;top:233.2px;width:9.7px;height:12.9px"></div>
<div class="ar" style="left:642.0px;top:236.7px;border-right:3px solid #909090"></div>
<div class="sb" style="left:648.2px;top:233.2px;width:9.7px;height:12.9px"></div>
<div class="ar" style="left:652.2px;top:236.7px;border-left:3px solid #909090"></div>
<div class="abs" style="left:504px;top:246.1px;width:31.5px;height:12.9px;background:#fff;border-top:1px solid #383838;border-left:1px solid #383838;box-shadow:inset 1px 1px 0 #7a7a7a"></div>
<div class="t" style="left:505px;top:247.4px;width:31px;text-align:center;color:#101010;font-size:10.5px;line-height:10px;letter-spacing:-0.55px">2126</div>
<div class="sb" style="left:535.5px;top:246.1px;width:10.0px;height:12.9px"></div>
<div class="ar" style="left:539.0px;top:249.6px;border-right:3px solid #101010"></div>
<div class="sb" style="left:545.5px;top:246.1px;width:10.0px;height:12.9px"></div>
<div class="ar" style="left:549.5px;top:249.6px;border-left:3px solid #101010"></div>
<div class="abs" style="left:561.5px;top:246.1px;width:25.5px;height:12.9px;background:#fff;border-top:1px solid #383838;border-left:1px solid #383838;box-shadow:inset 1px 1px 0 #7a7a7a"></div>
<div class="t" style="left:562.5px;top:247.4px;width:25px;text-align:center;color:#101010;font-size:10.5px;line-height:10px;letter-spacing:-0.55px">-45</div>
<div class="sb" style="left:587.0px;top:246.1px;width:9.7px;height:12.9px"></div>
<div class="ar" style="left:590.5px;top:249.6px;border-right:3px solid #101010"></div>
<div class="sb" style="left:596.7px;top:246.1px;width:9.7px;height:12.9px"></div>
<div class="ar" style="left:600.7px;top:249.6px;border-left:3px solid #101010"></div>
<div class="abs" style="left:613px;top:246.1px;width:25.5px;height:12.9px;background:#fff;border-top:1px solid #383838;border-left:1px solid #383838;box-shadow:inset 1px 1px 0 #7a7a7a"></div>
<div class="t" style="left:614px;top:247.4px;width:25px;text-align:center;color:#101010;font-size:10.5px;line-height:10px;letter-spacing:-0.55px">1/70</div>
<div class="sb" style="left:638.5px;top:246.1px;width:9.7px;height:12.9px"></div>
<div class="ar" style="left:642.0px;top:249.6px;border-right:3px solid #101010"></div>
<div class="sb" style="left:648.2px;top:246.1px;width:9.7px;height:12.9px"></div>
<div class="ar" style="left:652.2px;top:249.6px;border-left:3px solid #101010"></div>
<div class="abs" style="left:504px;top:258.9px;width:31.5px;height:12.9px;background:#fff;border-top:1px solid #383838;border-left:1px solid #383838;box-shadow:inset 1px 1px 0 #7a7a7a"></div>
<div class="t" style="left:505px;top:260.2px;width:31px;text-align:center;color:#101010;font-size:10.5px;line-height:10px;letter-spacing:-0.55px">2126</div>
<div class="sb" style="left:535.5px;top:258.9px;width:10.0px;height:12.9px"></div>
<div class="ar" style="left:539.0px;top:262.4px;border-right:3px solid #101010"></div>
<div class="sb" style="left:545.5px;top:258.9px;width:10.0px;height:12.9px"></div>
<div class="ar" style="left:549.5px;top:262.4px;border-left:3px solid #101010"></div>
<div class="abs" style="left:561.5px;top:258.9px;width:25.5px;height:12.9px;background:#fff;border-top:1px solid #383838;border-left:1px solid #383838;box-shadow:inset 1px 1px 0 #7a7a7a"></div>
<div class="t" style="left:562.5px;top:260.2px;width:25px;text-align:center;color:#101010;font-size:10.5px;line-height:10px;letter-spacing:-0.55px">-45</div>
<div class="sb" style="left:587.0px;top:258.9px;width:9.7px;height:12.9px"></div>
<div class="ar" style="left:590.5px;top:262.4px;border-right:3px solid #101010"></div>
<div class="sb" style="left:596.7px;top:258.9px;width:9.7px;height:12.9px"></div>
<div class="ar" style="left:600.7px;top:262.4px;border-left:3px solid #101010"></div>
<div class="abs" style="left:613px;top:258.9px;width:25.5px;height:12.9px;background:#fff;border-top:1px solid #383838;border-left:1px solid #383838;box-shadow:inset 1px 1px 0 #7a7a7a"></div>
<div class="t" style="left:614px;top:260.2px;width:25px;text-align:center;color:#101010;font-size:10.5px;line-height:10px;letter-spacing:-0.55px">1/70</div>
<div class="sb" style="left:638.5px;top:258.9px;width:9.7px;height:12.9px"></div>
<div class="ar" style="left:642.0px;top:262.4px;border-right:3px solid #101010"></div>
<div class="sb" style="left:648.2px;top:258.9px;width:9.7px;height:12.9px"></div>
<div class="ar" style="left:652.2px;top:262.4px;border-left:3px solid #101010"></div>
<div class="abs" style="left:504px;top:271.8px;width:31.5px;height:12.9px;background:#fff;border-top:1px solid #383838;border-left:1px solid #383838;box-shadow:inset 1px 1px 0 #7a7a7a"></div>
<div class="t" style="left:505px;top:273.1px;width:31px;text-align:center;color:#101010;font-size:10.5px;line-height:10px;letter-spacing:-0.55px">2126</div>
<div class="sb" style="left:535.5px;top:271.8px;width:10.0px;height:12.9px"></div>
<div class="ar" style="left:539.0px;top:275.3px;border-right:3px solid #101010"></div>
<div class="sb" style="left:545.5px;top:271.8px;width:10.0px;height:12.9px"></div>
<div class="ar" style="left:549.5px;top:275.3px;border-left:3px solid #101010"></div>
<div class="abs" style="left:561.5px;top:271.8px;width:25.5px;height:12.9px;background:#fff;border-top:1px solid #383838;border-left:1px solid #383838;box-shadow:inset 1px 1px 0 #7a7a7a"></div>
<div class="t" style="left:562.5px;top:273.1px;width:25px;text-align:center;color:#101010;font-size:10.5px;line-height:10px;letter-spacing:-0.55px">-45</div>
<div class="sb" style="left:587.0px;top:271.8px;width:9.7px;height:12.9px"></div>
<div class="ar" style="left:590.5px;top:275.3px;border-right:3px solid #101010"></div>
<div class="sb" style="left:596.7px;top:271.8px;width:9.7px;height:12.9px"></div>
<div class="ar" style="left:600.7px;top:275.3px;border-left:3px solid #101010"></div>
<div class="abs" style="left:613px;top:271.8px;width:25.5px;height:12.9px;background:#fff;border-top:1px solid #383838;border-left:1px solid #383838;box-shadow:inset 1px 1px 0 #7a7a7a"></div>
<div class="t" style="left:614px;top:273.1px;width:25px;text-align:center;color:#101010;font-size:10.5px;line-height:10px;letter-spacing:-0.55px">1/70</div>
<div class="sb" style="left:638.5px;top:271.8px;width:9.7px;height:12.9px"></div>
<div class="ar" style="left:642.0px;top:275.3px;border-right:3px solid #101010"></div>
<div class="sb" style="left:648.2px;top:271.8px;width:9.7px;height:12.9px"></div>
<div class="ar" style="left:652.2px;top:275.3px;border-left:3px solid #101010"></div>
<div class="abs" style="left:504px;top:284.7px;width:31.5px;height:12.9px;background:#fff;border-top:1px solid #383838;border-left:1px solid #383838;box-shadow:inset 1px 1px 0 #7a7a7a"></div>
<div class="t" style="left:505px;top:286.0px;width:31px;text-align:center;color:#101010;font-size:10.5px;line-height:10px;letter-spacing:-0.55px">120,3</div>
<div class="sb" style="left:535.5px;top:284.7px;width:10.0px;height:12.9px"></div>
<div class="ar" style="left:539.0px;top:288.2px;border-right:3px solid #101010"></div>
<div class="sb" style="left:545.5px;top:284.7px;width:10.0px;height:12.9px"></div>
<div class="ar" style="left:549.5px;top:288.2px;border-left:3px solid #101010"></div>
<div class="abs" style="left:561.5px;top:284.7px;width:25.5px;height:12.9px;background:#fff;border-top:1px solid #383838;border-left:1px solid #383838;box-shadow:inset 1px 1px 0 #7a7a7a"></div>
<div class="t" style="left:562.5px;top:286.0px;width:25px;text-align:center;color:#101010;font-size:10.5px;line-height:10px;letter-spacing:-0.55px">-45</div>
<div class="sb" style="left:587.0px;top:284.7px;width:9.7px;height:12.9px"></div>
<div class="ar" style="left:590.5px;top:288.2px;border-right:3px solid #101010"></div>
<div class="sb" style="left:596.7px;top:284.7px;width:9.7px;height:12.9px"></div>
<div class="ar" style="left:600.7px;top:288.2px;border-left:3px solid #101010"></div>
<div class="abs" style="left:613px;top:284.7px;width:25.5px;height:12.9px;background:#fff;border-top:1px solid #383838;border-left:1px solid #383838;box-shadow:inset 1px 1px 0 #7a7a7a"></div>
<div class="t" style="left:614px;top:286.0px;width:25px;text-align:center;color:#101010;font-size:10.5px;line-height:10px;letter-spacing:-0.55px">1/20</div>
<div class="sb" style="left:638.5px;top:284.7px;width:9.7px;height:12.9px"></div>
<div class="ar" style="left:642.0px;top:288.2px;border-right:3px solid #101010"></div>
<div class="sb" style="left:648.2px;top:284.7px;width:9.7px;height:12.9px"></div>
<div class="ar" style="left:652.2px;top:288.2px;border-left:3px solid #101010"></div>
<div class="t b" style="left:505.70000000000005px;top:298.5px;width:30px;text-align:center;font-size:8px;line-height:8px;letter-spacing:-0.1px;color:#202020;font-family:'Liberation Serif'">Freq</div>
<div class="t b" style="left:563px;top:298.5px;width:30px;text-align:center;font-size:8px;line-height:8px;letter-spacing:-0.1px;color:#202020;font-family:'Liberation Serif'">Gain</div>
<div class="t b" style="left:611.3px;top:298.5px;width:30px;text-align:center;font-size:8px;line-height:8px;letter-spacing:-0.1px;color:#202020;font-family:'Liberation Serif'">Q</div>
<div class="etch" style="left:670px;top:135px;width:166px;height:130px"></div>
<div class="t" style="left:676.4px;top:144.9px;letter-spacing:0;transform:scaleX(0.857);transform-origin:0 0">Num notch automatic</div>
<div class="abs" style="left:760.0px;top:143.4px;width:13px;height:10.5px;background:#dedede;border-right:1.5px solid #484848;border-bottom:1.5px solid #606060;box-shadow:inset 1px 1px 0 #f8f8f8"></div>
<div class="ar" style="left:764.5px;top:145.9px;border-right:3px solid #101010"></div>
<div class="abs" style="left:772.5px;top:143.4px;width:13px;height:10.5px;background:#dedede;border-right:1.5px solid #484848;border-bottom:1.5px solid #606060;box-shadow:inset 1px 1px 0 #f8f8f8"></div>
<div class="ar" style="left:777.5px;top:145.9px;border-left:3px solid #101010"></div>
<div class="t b" style="left:777.8px;top:144.9px;width:60px;text-align:center;font-size:10px;letter-spacing:-0.1px;color:#0a0a0a">8</div>
<div class="t" style="left:676.4px;top:164.1px;letter-spacing:0;transform:scaleX(0.857);transform-origin:0 0">Q notch automatic</div>
<div class="abs" style="left:760.0px;top:162.6px;width:13px;height:10.5px;background:#dedede;border-right:1.5px solid #484848;border-bottom:1.5px solid #606060;box-shadow:inset 1px 1px 0 #f8f8f8"></div>
<div class="ar" style="left:764.5px;top:165.1px;border-right:3px solid #101010"></div>
<div class="abs" style="left:772.5px;top:162.6px;width:13px;height:10.5px;background:#dedede;border-right:1.5px solid #484848;border-bottom:1.5px solid #606060;box-shadow:inset 1px 1px 0 #f8f8f8"></div>
<div class="ar" style="left:777.5px;top:165.1px;border-left:3px solid #101010"></div>
<div class="t b" style="left:778px;top:164.1px;width:60px;text-align:center;font-size:10px;letter-spacing:-0.1px;color:#0a0a0a">1/70</div>
<div class="t" style="left:676.4px;top:183.3px;letter-spacing:0;transform:scaleX(0.857);transform-origin:0 0">Attenuation notch</div>
<div class="abs" style="left:760.0px;top:181.8px;width:13px;height:10.5px;background:#dedede;border-right:1.5px solid #484848;border-bottom:1.5px solid #606060;box-shadow:inset 1px 1px 0 #f8f8f8"></div>
<div class="ar" style="left:764.5px;top:184.3px;border-right:3px solid #101010"></div>
<div class="abs" style="left:772.5px;top:181.8px;width:13px;height:10.5px;background:#dedede;border-right:1.5px solid #484848;border-bottom:1.5px solid #606060;box-shadow:inset 1px 1px 0 #f8f8f8"></div>
<div class="ar" style="left:777.5px;top:184.3px;border-left:3px solid #101010"></div>
<div class="t b" style="left:781px;top:183.3px;width:60px;text-align:center;font-size:10px;letter-spacing:-0.1px;color:#0a0a0a">Variable</div>
<div class="t" style="left:676.4px;top:202.5px;letter-spacing:0;transform:scaleX(0.857);transform-origin:0 0">Release notch</div>
<div class="abs" style="left:760.0px;top:201.0px;width:13px;height:10.5px;background:#dedede;border-right:1.5px solid #484848;border-bottom:1.5px solid #606060;box-shadow:inset 1px 1px 0 #f8f8f8"></div>
<div class="ar" style="left:764.5px;top:203.5px;border-right:3px solid #101010"></div>
<div class="abs" style="left:772.5px;top:201.0px;width:13px;height:10.5px;background:#dedede;border-right:1.5px solid #484848;border-bottom:1.5px solid #606060;box-shadow:inset 1px 1px 0 #f8f8f8"></div>
<div class="ar" style="left:777.5px;top:203.5px;border-left:3px solid #101010"></div>
<div class="t b" style="left:781.3px;top:202.5px;width:60px;text-align:center;font-size:10px;letter-spacing:-0.1px;color:#0a0a0a">Fast</div>
<div class="t" style="left:676.4px;top:221.7px;letter-spacing:0;transform:scaleX(0.857);transform-origin:0 0">Mode search</div>
<div class="abs" style="left:760.0px;top:220.2px;width:13px;height:10.5px;background:#dedede;border-right:1.5px solid #484848;border-bottom:1.5px solid #606060;box-shadow:inset 1px 1px 0 #f8f8f8"></div>
<div class="ar" style="left:764.5px;top:222.7px;border-right:3px solid #101010"></div>
<div class="abs" style="left:772.5px;top:220.2px;width:13px;height:10.5px;background:#dedede;border-right:1.5px solid #484848;border-bottom:1.5px solid #606060;box-shadow:inset 1px 1px 0 #f8f8f8"></div>
<div class="ar" style="left:777.5px;top:222.7px;border-left:3px solid #101010"></div>
<div class="t b" style="left:784.4px;top:221.7px;width:60px;text-align:center;font-size:10px;letter-spacing:-0.1px;color:#0a0a0a">Fast</div>
<div class="t" style="left:676.4px;top:240.9px;letter-spacing:0;transform:scaleX(0.857);transform-origin:0 0">Sensitivity</div>
<div class="abs" style="left:725.5px;top:240.8px;width:68.5px;height:5px;border-top:1.6px solid #404040;border-left:1px solid #606060;border-bottom:1px solid #f8f8f8;background:#d4d4d4"></div>
<svg class="abs" style="left:0;top:0" width="1024" height="614"><rect x="756" y="240" width="4" height="7" fill="#d8d8d8"/><path d="M757.5 241v4l-1 2" fill="none" stroke="#303030" stroke-width="1.2"/></svg>
<svg class="abs" style="left:0;top:0" width="1024" height="614"><rect x="729.5" y="249.3" width="1.2" height="2" fill="#303030"/><rect x="734.0" y="249.3" width="1.2" height="2" fill="#303030"/><rect x="738.6" y="249.3" width="1.2" height="2" fill="#303030"/><rect x="743.1" y="249.3" width="1.2" height="2" fill="#303030"/><rect x="747.7" y="249.3" width="1.2" height="2" fill="#303030"/><rect x="752.2" y="249.3" width="1.2" height="2" fill="#303030"/><rect x="756.8" y="249.3" width="1.2" height="2" fill="#303030"/><rect x="761.4" y="249.3" width="1.2" height="2" fill="#303030"/><rect x="765.9" y="249.3" width="1.2" height="2" fill="#303030"/><rect x="770.5" y="249.3" width="1.2" height="2" fill="#303030"/><rect x="775.0" y="249.3" width="1.2" height="2" fill="#303030"/><rect x="779.5" y="249.3" width="1.2" height="2" fill="#303030"/><rect x="784.1" y="249.3" width="1.2" height="2" fill="#303030"/><rect x="788.6" y="249.3" width="1.2" height="2" fill="#303030"/><path d="M725 250.3l2-1.5v3z" fill="#101010"/><rect x="726" y="249.5" width="2" height="2" fill="#101010"/><rect x="792" y="248.5" width="1.5" height="3" fill="#303030"/></svg>
<div class="abs" style="left:798px;top:240px;width:33px;height:12px;background:#fcfcfc"></div>
<div class="t" style="left:798px;top:241.5px;width:33px;text-align:center;letter-spacing:0;font-size:10px">8</div>
<div class="etch" style="left:670px;top:270px;width:166px;height:40px"></div>
<div class="btn" style="left:676.5px;top:277.5px;width:71px;height:26.5px"></div>
<div class="t" style="left:676.5px;top:281.5px;width:71px;text-align:center;letter-spacing:0;transform:scaleX(0.86);transform-origin:50% 0">Reset Notch</div>
<div class="t" style="left:676.5px;top:291.5px;width:71px;text-align:center;letter-spacing:0;transform:scaleX(0.86);transform-origin:50% 0">Manual</div>
<div class="btn" style="left:760px;top:277.5px;width:71px;height:26.5px"></div>
<div class="t" style="left:760px;top:281.5px;width:71px;text-align:center;letter-spacing:0;transform:scaleX(0.86);transform-origin:50% 0">Reset Notch</div>
<div class="t" style="left:760px;top:291.5px;width:71px;text-align:center;letter-spacing:0;transform:scaleX(0.86);transform-origin:50% 0">Automatic</div>
<div class="abs" style="left:4px;top:327px;width:839px;height:1px;background:#a8a8a8"></div>
<div class="abs" style="left:4px;top:328px;width:839px;height:1px;background:#f0f0f0"></div>
<div class="abs" style="left:4px;top:520px;width:839px;height:1px;background:#a8a8a8"></div>
<div class="abs" style="left:4px;top:521px;width:839px;height:1px;background:#f0f0f0"></div>
<div class="abs" style="left:842px;top:327px;width:1px;height:194px;background:#a8a8a8"></div>
<div class="abs" style="left:4px;top:327px;width:1px;height:195px;background:#f0f0f0"></div>
<div class="abs" style="left:10px;top:323px;width:56px;height:10px;background:#d8d8d8"></div>
<div class="t" style="left:11.5px;top:323.7px;letter-spacing:0;transform:scaleX(0.836);transform-origin:0 0">Channel Right</div>
<div class="etch" style="left:10px;top:340px;width:481px;height:175px"></div>
<svg class="abs" style="left:0;top:0" width="1024" height="614"><rect x="16.5" y="347.5" width="461" height="154.2" fill="#fff" stroke="#b0b0b0" stroke-width="1"/><line x1="44.5" y1="348.5" x2="44.5" y2="501.7" stroke="#a8a8a8" stroke-width="1"/><line x1="63.5" y1="348.5" x2="63.5" y2="501.7" stroke="#a8a8a8" stroke-width="1"/><line x1="78.5" y1="348.5" x2="78.5" y2="501.7" stroke="#a8a8a8" stroke-width="1"/><line x1="90.5" y1="348.5" x2="90.5" y2="501.7" stroke="#a8a8a8" stroke-width="1"/><line x1="100.5" y1="348.5" x2="100.5" y2="501.7" stroke="#a8a8a8" stroke-width="1"/><line x1="109.5" y1="348.5" x2="109.5" y2="501.7" stroke="#a8a8a8" stroke-width="1"/><line x1="117.5" y1="348.5" x2="117.5" y2="501.7" stroke="#a8a8a8" stroke-width="1"/><line x1="124.5" y1="348.5" x2="124.5" y2="501.7" stroke="#a8a8a8" stroke-width="1"/><line x1="170.5" y1="348.5" x2="170.5" y2="501.7" stroke="#a8a8a8" stroke-width="1"/><line x1="197.5" y1="348.5" x2="197.5" y2="501.7" stroke="#a8a8a8" stroke-width="1"/><line x1="216.5" y1="348.5" x2="216.5" y2="501.7" stroke="#a8a8a8" stroke-width="1"/><line x1="231.5" y1="348.5" x2="231.5" y2="501.7" stroke="#a8a8a8" stroke-width="1"/><line x1="243.5" y1="348.5" x2="243.5" y2="501.7" stroke="#a8a8a8" stroke-width="1"/><line x1="253.5" y1="348.5" x2="253.5" y2="501.7" stroke="#a8a8a8" stroke-width="1"/><line x1="262.5" y1="348.5" x2="262.5" y2="501.7" stroke="#a8a8a8" stroke-width="1"/><line x1="270.5" y1="348.5" x2="270.5" y2="501.7" stroke="#a8a8a8" stroke-width="1"/><line x1="277.5" y1="348.5" x2="277.5" y2="501.7" stroke="#a8a8a8" stroke-width="1"/><line x1="323.5" y1="348.5" x2="323.5" y2="501.7" stroke="#a8a8a8" stroke-width="1"/><line x1="350.5" y1="348.5" x2="350.5" y2="501.7" stroke="#a8a8a8" stroke-width="1"/><line x1="369.5" y1="348.5" x2="369.5" y2="501.7" stroke="#a8a8a8" stroke-width="1"/><line x1="384.5" y1="348.5" x2="384.5" y2="501.7" stroke="#a8a8a8" stroke-width="1"/><line x1="396.5" y1="348.5" x2="396.5" y2="501.7" stroke="#a8a8a8" stroke-width="1"/><line x1="407.5" y1="348.5" x2="407.5" y2="501.7" stroke="#a8a8a8" stroke-width="1"/><line x1="416.5" y1="348.5" x2="416.5" y2="501.7" stroke="#a8a8a8" stroke-width="1"/><line x1="423.5" y1="348.5" x2="423.5" y2="501.7" stroke="#a8a8a8" stroke-width="1"/><line x1="430.5" y1="348.5" x2="430.5" y2="501.7" stroke="#a8a8a8" stroke-width="1"/><line x1="17.5" y1="374.5" x2="477.5" y2="374.5" stroke="#a8a8a8" stroke-width="1"/><line x1="17.5" y1="399.5" x2="477.5" y2="399.5" stroke="#a8a8a8" stroke-width="1"/><line x1="17.5" y1="425.5" x2="477.5" y2="425.5" stroke="#a8a8a8" stroke-width="1"/><line x1="17.5" y1="450.5" x2="477.5" y2="450.5" stroke="#a8a8a8" stroke-width="1"/><line x1="17.5" y1="476.5" x2="477.5" y2="476.5" stroke="#a8a8a8" stroke-width="1"/><polyline points="18.50,374.50 19.50,374.50 20.50,374.50 21.50,374.50 22.50,374.50 23.50,374.50 24.50,374.50 25.50,374.50 26.50,374.50 27.50,374.50 28.50,374.50 29.50,374.50 30.50,374.50 31.50,374.50 32.50,374.50 33.50,374.50 34.50,374.50 35.50,374.50 36.50,374.50 37.50,374.50 38.50,374.50 39.50,374.50 40.50,374.50 41.50,374.50 42.50,374.50 43.50,374.50 44.50,374.50 45.50,374.50 46.50,374.50 47.50,374.50 48.50,374.50 49.50,374.50 50.50,374.50 51.50,374.50 52.50,374.50 53.50,374.50 54.50,374.50 55.50,374.51 56.50,374.51 57.50,374.51 58.50,374.51 59.50,374.51 60.50,374.51 61.50,374.51 62.50,374.51 63.50,374.51 64.50,374.51 65.50,374.51 66.50,374.51 67.50,374.51 68.50,374.51 69.50,374.51 70.50,374.51 71.50,374.51 72.50,374.51 73.50,374.51 74.50,374.51 75.50,374.51 76.50,374.51 77.50,374.51 78.50,374.51 79.50,374.51 80.50,374.51 81.50,374.51 82.50,374.51 83.50,374.51 84.50,374.51 85.50,374.51 86.50,374.51 87.50,374.51 88.50,374.51 89.50,374.51 90.50,374.51 91.50,374.51 92.50,374.51 93.50,374.51 94.50,374.51 95.50,374.51 96.50,374.51 97.50,374.51 98.50,374.51 99.50,374.51 100.50,374.51 101.50,374.51 102.50,374.51 103.50,374.51 104.50,374.51 105.50,374.51 106.50,374.51 107.50,374.51 108.50,374.51 109.50,374.51 110.50,374.51 111.50,374.51 112.50,374.51 113.50,374.51 114.50,374.51 115.50,374.51 116.50,374.52 117.50,374.52 118.50,374.52 119.50,374.52 120.50,374.52 121.50,374.52 122.50,374.52 123.50,374.52 124.50,374.52 125.50,374.52 126.50,374.52 127.50,374.52 128.50,374.52 129.50,374.52 130.50,374.52 131.50,374.52 132.50,374.52 133.50,374.53 134.50,374.53 135.50,374.53 136.50,374.53 137.50,374.53 138.50,374.53 139.50,374.53 140.50,374.53 141.50,374.53 142.50,374.54 143.50,374.54 144.50,374.54 145.50,374.54 146.50,374.54 147.50,374.55 148.50,374.55 149.50,374.55 150.50,374.55 151.50,374.56 152.50,374.56 153.50,374.56 154.50,374.57 155.50,374.57 156.50,374.58 157.50,374.58 158.50,374.59 159.50,374.60 160.50,374.60 161.50,374.61 162.50,374.62 163.50,374.64 164.50,374.65 165.50,374.66 166.50,374.68 167.50,374.70 168.50,374.73 169.50,374.76 170.50,374.79 171.50,374.84 172.50,374.89 173.50,374.96 174.50,375.05 175.50,375.18 176.50,375.34 177.50,375.58 178.50,375.94 179.50,376.50 180.50,377.48 181.50,379.40 182.50,383.97 183.50,399.56 184.50,501.70 185.50,501.70 186.50,399.56 187.50,383.97 188.50,379.40 189.50,377.48 190.50,376.50 191.50,375.94 192.50,375.58 193.50,375.34 194.50,375.18 195.50,375.06 196.50,374.96 197.50,374.89 198.50,374.84 199.50,374.79 200.50,374.76 201.50,374.73 202.50,374.70 203.50,374.68 204.50,374.67 205.50,374.65 206.50,374.64 207.50,374.63 208.50,374.62 209.50,374.61 210.50,374.60 211.50,374.59 212.50,374.59 213.50,374.58 214.50,374.58 215.50,374.57 216.50,374.57 217.50,374.57 218.50,374.56 219.50,374.56 220.50,374.56 221.50,374.55 222.50,374.55 223.50,374.55 224.50,374.55 225.50,374.55 226.50,374.55 227.50,374.54 228.50,374.54 229.50,374.54 230.50,374.54 231.50,374.54 232.50,374.54 233.50,374.54 234.50,374.54 235.50,374.54 236.50,374.54 237.50,374.54 238.50,374.54 239.50,374.54 240.50,374.53 241.50,374.53 242.50,374.53 243.50,374.53 244.50,374.53 245.50,374.53 246.50,374.53 247.50,374.54 248.50,374.54 249.50,374.54 250.50,374.54 251.50,374.54 252.50,374.54 253.50,374.54 254.50,374.54 255.50,374.54 256.50,374.54 257.50,374.54 258.50,374.54 259.50,374.54 260.50,374.55 261.50,374.55 262.50,374.55 263.50,374.55 264.50,374.55 265.50,374.56 266.50,374.56 267.50,374.56 268.50,374.57 269.50,374.57 270.50,374.57 271.50,374.58 272.50,374.59 273.50,374.59 274.50,374.60 275.50,374.61 276.50,374.62 277.50,374.64 278.50,374.65 279.50,374.67 280.50,374.69 281.50,374.72 282.50,374.76 283.50,374.81 284.50,374.87 285.50,374.95 286.50,375.07 287.50,375.24 288.50,375.51 289.50,375.94 290.50,376.74 291.50,378.44 292.50,383.14 293.50,405.14 294.50,501.70 295.50,405.14 296.50,383.14 297.50,378.44 298.50,376.74 299.50,375.94 300.50,375.51 301.50,375.24 302.50,375.07 303.50,374.95 304.50,374.87 305.50,374.81 306.50,374.76 307.50,374.72 308.50,374.69 309.50,374.67 310.50,374.65 311.50,374.64 312.50,374.62 313.50,374.61 314.50,374.60 315.50,374.59 316.50,374.59 317.50,374.58 318.50,374.57 319.50,374.57 320.50,374.57 321.50,374.56 322.50,374.56 323.50,374.56 324.50,374.55 325.50,374.55 326.50,374.55 327.50,374.55 328.50,374.54 329.50,374.54 330.50,374.54 331.50,374.54 332.50,374.54 333.50,374.54 334.50,374.54 335.50,374.54 336.50,374.53 337.50,374.53 338.50,374.53 339.50,374.53 340.50,374.53 341.50,374.53 342.50,374.53 343.50,374.53 344.50,374.53 345.50,374.53 346.50,374.53 347.50,374.53 348.50,374.53 349.50,374.53 350.50,374.53 351.50,374.53 352.50,374.53 353.50,374.53 354.50,374.53 355.50,374.53 356.50,374.53 357.50,374.53 358.50,374.53 359.50,374.53 360.50,374.53 361.50,374.53 362.50,374.53 363.50,374.53 364.50,374.53 365.50,374.53 366.50,374.53 367.50,374.53 368.50,374.54 369.50,374.54 370.50,374.54 371.50,374.54 372.50,374.54 373.50,374.54 374.50,374.54 375.50,374.54 376.50,374.54 377.50,374.54 378.50,374.54 379.50,374.55 380.50,374.55 381.50,374.55 382.50,374.55 383.50,374.55 384.50,374.55 385.50,374.56 386.50,374.56 387.50,374.56 388.50,374.56 389.50,374.57 390.50,374.57 391.50,374.57 392.50,374.57 393.50,374.58 394.50,374.58 395.50,374.59 396.50,374.59 397.50,374.60 398.50,374.60 399.50,374.61 400.50,374.61 401.50,374.62 402.50,374.63 403.50,374.64 404.50,374.65 405.50,374.66 406.50,374.67 407.50,374.69 408.50,374.70 409.50,374.72 410.50,374.74 411.50,374.77 412.50,374.80 413.50,374.83 414.50,374.87 415.50,374.92 416.50,374.97 417.50,375.04 418.50,375.13 419.50,375.23 420.50,375.37 421.50,375.55 422.50,375.80 423.50,376.13 424.50,376.62 425.50,377.37 426.50,378.59 427.50,380.76 428.50,385.18 429.50,396.02 430.50,429.61 431.50,489.40 432.50,429.61 433.50,396.02 434.50,385.18 435.50,380.76 436.50,378.59 437.50,377.37 438.50,376.62 439.50,376.13 440.50,375.80 441.50,375.55 442.50,375.37 443.50,375.23 444.50,375.13 445.50,375.04 446.50,374.97 447.50,374.91 448.50,374.87 449.50,374.83 450.50,374.79 451.50,374.77 452.50,374.74 453.50,374.72 454.50,374.70 455.50,374.69 456.50,374.67 457.50,374.66 458.50,374.65 459.50,374.64 460.50,374.63 461.50,374.62 462.50,374.61 463.50,374.61 464.50,374.60 465.50,374.59 466.50,374.59 467.50,374.58 468.50,374.58 469.50,374.58 470.50,374.57 471.50,374.57 472.50,374.56 473.50,374.56 474.50,374.56 475.50,374.56 476.50,374.55 477.50,374.55" fill="none" stroke="#1848a0" stroke-width="1.05"/></svg>
<div class="t" style="left:479px;top:349.4px;font-size:7.5px;line-height:7px;letter-spacing:-0.4px;color:#181818">+10</div>
<div class="t" style="left:479px;top:368.9px;font-size:7.5px;line-height:7px;letter-spacing:-0.4px;color:#181818">0</div>
<div class="t" style="left:479px;top:394.3px;font-size:7.5px;line-height:7px;letter-spacing:-0.4px;color:#181818">-10</div>
<div class="t" style="left:479px;top:420.0px;font-size:7.5px;line-height:7px;letter-spacing:-0.4px;color:#181818">-20</div>
<div class="t" style="left:479px;top:445.3px;font-size:7.5px;line-height:7px;letter-spacing:-0.4px;color:#181818">-30</div>
<div class="t" style="left:479px;top:471.0px;font-size:7.5px;line-height:7px;letter-spacing:-0.4px;color:#181818">-40</div>
<div class="t" style="left:479px;top:496.5px;font-size:7.5px;line-height:7px;letter-spacing:-0.4px;color:#181818">-50</div>
<div class="t" style="left:17.3px;width:30px;text-align:left;top:504px;font-size:7.5px;line-height:8px;letter-spacing:-0.2px;color:#202020;font-family:'Liberation Serif';-webkit-text-stroke:0.3px #202020">20Hz</div>
<div class="t" style="left:115.5px;width:24px;text-align:center;top:504px;font-size:7.5px;line-height:8px;letter-spacing:-0.2px;color:#202020;font-family:'Liberation Serif';-webkit-text-stroke:0.3px #202020">100Hz</div>
<div class="t" style="left:268.7px;width:24px;text-align:center;top:504px;font-size:7.5px;line-height:8px;letter-spacing:-0.2px;color:#202020;font-family:'Liberation Serif';-webkit-text-stroke:0.3px #202020">1KHz</div>
<div class="t" style="left:421.8px;width:24px;text-align:center;top:504px;font-size:7.5px;line-height:8px;letter-spacing:-0.2px;color:#202020;font-family:'Liberation Serif';-webkit-text-stroke:0.3px #202020">10KHz</div>
<div class="etch" style="left:497px;top:340px;width:166px;height:175px"></div>
<div class="abs" style="left:504px;top:348.1px;width:31.5px;height:12.9px;background:#fff;border-top:1px solid #383838;border-left:1px solid #383838;box-shadow:inset 1px 1px 0 #7a7a7a"></div>
<div class="t" style="left:505px;top:349.4px;width:31px;text-align:center;color:#8c8c8c;font-size:10.5px;line-height:10px;letter-spacing:-0.55px">1272</div>
<div class="sb" style="left:535.5px;top:348.1px;width:10.0px;height:12.9px"></div>
<div class="ar" style="left:539.0px;top:351.6px;border-right:3px solid #909090"></div>
<div class="sb" style="left:545.5px;top:348.1px;width:10.0px;height:12.9px"></div>
<div class="ar" style="left:549.5px;top:351.6px;border-left:3px solid #909090"></div>
<div class="abs" style="left:561.5px;top:348.1px;width:25.5px;height:12.9px;background:#fff;border-top:1px solid #383838;border-left:1px solid #383838;box-shadow:inset 1px 1px 0 #7a7a7a"></div>
<div class="t" style="left:562.5px;top:349.4px;width:25px;text-align:center;color:#8c8c8c;font-size:10.5px;line-height:10px;letter-spacing:-0.55px">-10</div>
<div class="sb" style="left:587.0px;top:348.1px;width:9.7px;height:12.9px"></div>
<div class="ar" style="left:590.5px;top:351.6px;border-right:3px solid #909090"></div>
<div class="sb" style="left:596.7px;top:348.1px;width:9.7px;height:12.9px"></div>
<div class="ar" style="left:600.7px;top:351.6px;border-left:3px solid #909090"></div>
<div class="abs" style="left:613px;top:348.1px;width:25.5px;height:12.9px;background:#fff;border-top:1px solid #383838;border-left:1px solid #383838;box-shadow:inset 1px 1px 0 #7a7a7a"></div>
<div class="t" style="left:614px;top:349.4px;width:25px;text-align:center;color:#8c8c8c;font-size:10.5px;line-height:10px;letter-spacing:-0.55px">1/70</div>
<div class="sb" style="left:638.5px;top:348.1px;width:9.7px;height:12.9px"></div>
<div class="ar" style="left:642.0px;top:351.6px;border-right:3px solid #909090"></div>
<div class="sb" style="left:648.2px;top:348.1px;width:9.7px;height:12.9px"></div>
<div class="ar" style="left:652.2px;top:351.6px;border-left:3px solid #909090"></div>
<div class="abs" style="left:504px;top:361.0px;width:31.5px;height:12.9px;background:#fff;border-top:1px solid #383838;border-left:1px solid #383838;box-shadow:inset 1px 1px 0 #7a7a7a"></div>
<div class="t" style="left:505px;top:362.3px;width:31px;text-align:center;color:#8c8c8c;font-size:10.5px;line-height:10px;letter-spacing:-0.55px">1272</div>
<div class="sb" style="left:535.5px;top:361.0px;width:10.0px;height:12.9px"></div>
<div class="ar" style="left:539.0px;top:364.5px;border-right:3px solid #909090"></div>
<div class="sb" style="left:545.5px;top:361.0px;width:10.0px;height:12.9px"></div>
<div class="ar" style="left:549.5px;top:364.5px;border-left:3px solid #909090"></div>
<div class="abs" style="left:561.5px;top:361.0px;width:25.5px;height:12.9px;background:#fff;border-top:1px solid #383838;border-left:1px solid #383838;box-shadow:inset 1px 1px 0 #7a7a7a"></div>
<div class="t" style="left:562.5px;top:362.3px;width:25px;text-align:center;color:#8c8c8c;font-size:10.5px;line-height:10px;letter-spacing:-0.55px">-10</div>
<div class="sb" style="left:587.0px;top:361.0px;width:9.7px;height:12.9px"></div>
<div class="ar" style="left:590.5px;top:364.5px;border-right:3px solid #909090"></div>
<div class="sb" style="left:596.7px;top:361.0px;width:9.7px;height:12.9px"></div>
<div class="ar" style="left:600.7px;top:364.5px;border-left:3px solid #909090"></div>
<div class="abs" style="left:613px;top:361.0px;width:25.5px;height:12.9px;background:#fff;border-top:1px solid #383838;border-left:1px solid #383838;box-shadow:inset 1px 1px 0 #7a7a7a"></div>
<div class="t" style="left:614px;top:362.3px;width:25px;text-align:center;color:#8c8c8c;font-size:10.5px;line-height:10px;letter-spacing:-0.55px">1/70</div>
<div class="sb" style="left:638.5px;top:361.0px;width:9.7px;height:12.9px"></div>
<div class="ar" style="left:642.0px;top:364.5px;border-right:3px solid #909090"></div>
<div class="sb" style="left:648.2px;top:361.0px;width:9.7px;height:12.9px"></div>
<div class="ar" style="left:652.2px;top:364.5px;border-left:3px solid #909090"></div>
<div class="abs" style="left:504px;top:373.8px;width:31.5px;height:12.9px;background:#fff;border-top:1px solid #383838;border-left:1px solid #383838;box-shadow:inset 1px 1px 0 #7a7a7a"></div>
<div class="t" style="left:505px;top:375.1px;width:31px;text-align:center;color:#8c8c8c;font-size:10.5px;line-height:10px;letter-spacing:-0.55px">1272</div>
<div class="sb" style="left:535.5px;top:373.8px;width:10.0px;height:12.9px"></div>
<div class="ar" style="left:539.0px;top:377.3px;border-right:3px solid #909090"></div>
<div class="sb" style="left:545.5px;top:373.8px;width:10.0px;height:12.9px"></div>
<div class="ar" style="left:549.5px;top:377.3px;border-left:3px solid #909090"></div>
<div class="abs" style="left:561.5px;top:373.8px;width:25.5px;height:12.9px;background:#fff;border-top:1px solid #383838;border-left:1px solid #383838;box-shadow:inset 1px 1px 0 #7a7a7a"></div>
<div class="t" style="left:562.5px;top:375.1px;width:25px;text-align:center;color:#8c8c8c;font-size:10.5px;line-height:10px;letter-spacing:-0.55px">-10</div>
<div class="sb" style="left:587.0px;top:373.8px;width:9.7px;height:12.9px"></div>
<div class="ar" style="left:590.5px;top:377.3px;border-right:3px solid #909090"></div>
<div class="sb" style="left:596.7px;top:373.8px;width:9.7px;height:12.9px"></div>
<div class="ar" style="left:600.7px;top:377.3px;border-left:3px solid #909090"></div>
<div class="abs" style="left:613px;top:373.8px;width:25.5px;height:12.9px;background:#fff;border-top:1px solid #383838;border-left:1px solid #383838;box-shadow:inset 1px 1px 0 #7a7a7a"></div>
<div class="t" style="left:614px;top:375.1px;width:25px;text-align:center;color:#8c8c8c;font-size:10.5px;line-height:10px;letter-spacing:-0.55px">1/70</div>
<div class="sb" style="left:638.5px;top:373.8px;width:9.7px;height:12.9px"></div>
<div class="ar" style="left:642.0px;top:377.3px;border-right:3px solid #909090"></div>
<div class="sb" style="left:648.2px;top:373.8px;width:9.7px;height:12.9px"></div>
<div class="ar" style="left:652.2px;top:377.3px;border-left:3px solid #909090"></div>
<div class="abs" style="left:504px;top:386.7px;width:31.5px;height:12.9px;background:#fff;border-top:1px solid #383838;border-left:1px solid #383838;box-shadow:inset 1px 1px 0 #7a7a7a"></div>
<div class="t" style="left:505px;top:388.0px;width:31px;text-align:center;color:#8c8c8c;font-size:10.5px;line-height:10px;letter-spacing:-0.55px">1272</div>
<div class="sb" style="left:535.5px;top:386.7px;width:10.0px;height:12.9px"></div>
<div class="ar" style="left:539.0px;top:390.2px;border-right:3px solid #909090"></div>
<div class="sb" style="left:545.5px;top:386.7px;width:10.0px;height:12.9px"></div>
<div class="ar" style="left:549.5px;top:390.2px;border-left:3px solid #909090"></div>
<div class="abs" style="left:561.5px;top:386.7px;width:25.5px;height:12.9px;background:#fff;border-top:1px solid #383838;border-left:1px solid #383838;box-shadow:inset 1px 1px 0 #7a7a7a"></div>
<div class="t" style="left:562.5px;top:388.0px;width:25px;text-align:center;color:#8c8c8c;font-size:10.5px;line-height:10px;letter-spacing:-0.55px">-10</div>
<div class="sb" style="left:587.0px;top:386.7px;width:9.7px;height:12.9px"></div>
<div class="ar" style="left:590.5px;top:390.2px;border-right:3px solid #909090"></div>
<div class="sb" style="left:596.7px;top:386.7px;width:9.7px;height:12.9px"></div>
<div class="ar" style="left:600.7px;top:390.2px;border-left:3px solid #909090"></div>
<div class="abs" style="left:613px;top:386.7px;width:25.5px;height:12.9px;background:#fff;border-top:1px solid #383838;border-left:1px solid #383838;box-shadow:inset 1px 1px 0 #7a7a7a"></div>
<div class="t" style="left:614px;top:388.0px;width:25px;text-align:center;color:#8c8c8c;font-size:10.5px;line-height:10px;letter-spacing:-0.55px">1/70</div>
<div class="sb" style="left:638.5px;top:386.7px;width:9.7px;height:12.9px"></div>
<div class="ar" style="left:642.0px;top:390.2px;border-right:3px solid #909090"></div>
<div class="sb" style="left:648.2px;top:386.7px;width:9.7px;height:12.9px"></div>
<div class="ar" style="left:652.2px;top:390.2px;border-left:3px solid #909090"></div>
<div class="abs" style="left:504px;top:399.6px;width:31.5px;height:12.9px;background:#fff;border-top:1px solid #383838;border-left:1px solid #383838;box-shadow:inset 1px 1px 0 #7a7a7a"></div>
<div class="t" style="left:505px;top:400.9px;width:31px;text-align:center;color:#8c8c8c;font-size:10.5px;line-height:10px;letter-spacing:-0.55px">1272</div>
<div class="sb" style="left:535.5px;top:399.6px;width:10.0px;height:12.9px"></div>
<div class="ar" style="left:539.0px;top:403.1px;border-right:3px solid #909090"></div>
<div class="sb" style="left:545.5px;top:399.6px;width:10.0px;height:12.9px"></div>
<div class="ar" style="left:549.5px;top:403.1px;border-left:3px solid #909090"></div>
<div class="abs" style="left:561.5px;top:399.6px;width:25.5px;height:12.9px;background:#fff;border-top:1px solid #383838;border-left:1px solid #383838;box-shadow:inset 1px 1px 0 #7a7a7a"></div>
<div class="t" style="left:562.5px;top:400.9px;width:25px;text-align:center;color:#8c8c8c;font-size:10.5px;line-height:10px;letter-spacing:-0.55px">-10</div>
<div class="sb" style="left:587.0px;top:399.6px;width:9.7px;height:12.9px"></div>
<div class="ar" style="left:590.5px;top:403.1px;border-right:3px solid #909090"></div>
<div class="sb" style="left:596.7px;top:399.6px;width:9.7px;height:12.9px"></div>
<div class="ar" style="left:600.7px;top:403.1px;border-left:3px solid #909090"></div>
<div class="abs" style="left:613px;top:399.6px;width:25.5px;height:12.9px;background:#fff;border-top:1px solid #383838;border-left:1px solid #383838;box-shadow:inset 1px 1px 0 #7a7a7a"></div>
<div class="t" style="left:614px;top:400.9px;width:25px;text-align:center;color:#8c8c8c;font-size:10.5px;line-height:10px;letter-spacing:-0.55px">1/70</div>
<div class="sb" style="left:638.5px;top:399.6px;width:9.7px;height:12.9px"></div>
<div class="ar" style="left:642.0px;top:403.1px;border-right:3px solid #909090"></div>
<div class="sb" style="left:648.2px;top:399.6px;width:9.7px;height:12.9px"></div>
<div class="ar" style="left:652.2px;top:403.1px;border-left:3px solid #909090"></div>
<div class="abs" style="left:504px;top:412.5px;width:31.5px;height:12.9px;background:#fff;border-top:1px solid #383838;border-left:1px solid #383838;box-shadow:inset 1px 1px 0 #7a7a7a"></div>
<div class="t" style="left:505px;top:413.8px;width:31px;text-align:center;color:#8c8c8c;font-size:10.5px;line-height:10px;letter-spacing:-0.55px">1272</div>
<div class="sb" style="left:535.5px;top:412.5px;width:10.0px;height:12.9px"></div>
<div class="ar" style="left:539.0px;top:416.0px;border-right:3px solid #909090"></div>
<div class="sb" style="left:545.5px;top:412.5px;width:10.0px;height:12.9px"></div>
<div class="ar" style="left:549.5px;top:416.0px;border-left:3px solid #909090"></div>
<div class="abs" style="left:561.5px;top:412.5px;width:25.5px;height:12.9px;background:#fff;border-top:1px solid #383838;border-left:1px solid #383838;box-shadow:inset 1px 1px 0 #7a7a7a"></div>
<div class="t" style="left:562.5px;top:413.8px;width:25px;text-align:center;color:#8c8c8c;font-size:10.5px;line-height:10px;letter-spacing:-0.55px">-10</div>
<div class="sb" style="left:587.0px;top:412.5px;width:9.7px;height:12.9px"></div>
<div class="ar" style="left:590.5px;top:416.0px;border-right:3px solid #909090"></div>
<div class="sb" style="left:596.7px;top:412.5px;width:9.7px;height:12.9px"></div>
<div class="ar" style="left:600.7px;top:416.0px;border-left:3px solid #909090"></div>
<div class="abs" style="left:613px;top:412.5px;width:25.5px;height:12.9px;background:#fff;border-top:1px solid #383838;border-left:1px solid #383838;box-shadow:inset 1px 1px 0 #7a7a7a"></div>
<div class="t" style="left:614px;top:413.8px;width:25px;text-align:center;color:#8c8c8c;font-size:10.5px;line-height:10px;letter-spacing:-0.55px">1/70</div>
<div class="sb" style="left:638.5px;top:412.5px;width:9.7px;height:12.9px"></div>
<div class="ar" style="left:642.0px;top:416.0px;border-right:3px solid #909090"></div>
<div class="sb" style="left:648.2px;top:412.5px;width:9.7px;height:12.9px"></div>
<div class="ar" style="left:652.2px;top:416.0px;border-left:3px solid #909090"></div>
<div class="abs" style="left:504px;top:425.3px;width:31.5px;height:12.9px;background:#fff;border-top:1px solid #383838;border-left:1px solid #383838;box-shadow:inset 1px 1px 0 #7a7a7a"></div>
<div class="t" style="left:505px;top:426.6px;width:31px;text-align:center;color:#8c8c8c;font-size:10.5px;line-height:10px;letter-spacing:-0.55px">1272</div>
<div class="sb" style="left:535.5px;top:425.3px;width:10.0px;height:12.9px"></div>
<div class="ar" style="left:539.0px;top:428.8px;border-right:3px solid #909090"></div>
<div class="sb" style="left:545.5px;top:425.3px;width:10.0px;height:12.9px"></div>
<div class="ar" style="left:549.5px;top:428.8px;border-left:3px solid #909090"></div>
<div class="abs" style="left:561.5px;top:425.3px;width:25.5px;height:12.9px;background:#fff;border-top:1px solid #383838;border-left:1px solid #383838;box-shadow:inset 1px 1px 0 #7a7a7a"></div>
<div class="t" style="left:562.5px;top:426.6px;width:25px;text-align:center;color:#8c8c8c;font-size:10.5px;line-height:10px;letter-spacing:-0.55px">-10</div>
<div class="sb" style="left:587.0px;top:425.3px;width:9.7px;height:12.9px"></div>
<div class="ar" style="left:590.5px;top:428.8px;border-right:3px solid #909090"></div>
<div class="sb" style="left:596.7px;top:425.3px;width:9.7px;height:12.9px"></div>
<div class="ar" style="left:600.7px;top:428.8px;border-left:3px solid #909090"></div>
<div class="abs" style="left:613px;top:425.3px;width:25.5px;height:12.9px;background:#fff;border-top:1px solid #383838;border-left:1px solid #383838;box-shadow:inset 1px 1px 0 #7a7a7a"></div>
<div class="t" style="left:614px;top:426.6px;width:25px;text-align:center;color:#8c8c8c;font-size:10.5px;line-height:10px;letter-spacing:-0.55px">1/70</div>
<div class="sb" style="left:638.5px;top:425.3px;width:9.7px;height:12.9px"></div>
<div class="ar" style="left:642.0px;top:428.8px;border-right:3px solid #909090"></div>
<div class="sb" style="left:648.2px;top:425.3px;width:9.7px;height:12.9px"></div>
<div class="ar" style="left:652.2px;top:428.8px;border-left:3px solid #909090"></div>
<div class="abs" style="left:504px;top:438.2px;width:31.5px;height:12.9px;background:#fff;border-top:1px solid #383838;border-left:1px solid #383838;box-shadow:inset 1px 1px 0 #7a7a7a"></div>
<div class="t" style="left:505px;top:439.5px;width:31px;text-align:center;color:#8c8c8c;font-size:10.5px;line-height:10px;letter-spacing:-0.55px">1272</div>
<div class="sb" style="left:535.5px;top:438.2px;width:10.0px;height:12.9px"></div>
<div class="ar" style="left:539.0px;top:441.7px;border-right:3px solid #909090"></div>
<div class="sb" style="left:545.5px;top:438.2px;width:10.0px;height:12.9px"></div>
<div class="ar" style="left:549.5px;top:441.7px;border-left:3px solid #909090"></div>
<div class="abs" style="left:561.5px;top:438.2px;width:25.5px;height:12.9px;background:#fff;border-top:1px solid #383838;border-left:1px solid #383838;box-shadow:inset 1px 1px 0 #7a7a7a"></div>
<div class="t" style="left:562.5px;top:439.5px;width:25px;text-align:center;color:#8c8c8c;font-size:10.5px;line-height:10px;letter-spacing:-0.55px">-10</div>
<div class="sb" style="left:587.0px;top:438.2px;width:9.7px;height:12.9px"></div>
<div class="ar" style="left:590.5px;top:441.7px;border-right:3px solid #909090"></div>
<div class="sb" style="left:596.7px;top:438.2px;width:9.7px;height:12.9px"></div>
<div class="ar" style="left:600.7px;top:441.7px;border-left:3px solid #909090"></div>
<div class="abs" style="left:613px;top:438.2px;width:25.5px;height:12.9px;background:#fff;border-top:1px solid #383838;border-left:1px solid #383838;box-shadow:inset 1px 1px 0 #7a7a7a"></div>
<div class="t" style="left:614px;top:439.5px;width:25px;text-align:center;color:#8c8c8c;font-size:10.5px;line-height:10px;letter-spacing:-0.55px">1/70</div>
<div class="sb" style="left:638.5px;top:438.2px;width:9.7px;height:12.9px"></div>
<div class="ar" style="left:642.0px;top:441.7px;border-right:3px solid #909090"></div>
<div class="sb" style="left:648.2px;top:438.2px;width:9.7px;height:12.9px"></div>
<div class="ar" style="left:652.2px;top:441.7px;border-left:3px solid #909090"></div>
<div class="abs" style="left:504px;top:451.1px;width:31.5px;height:12.9px;background:#fff;border-top:1px solid #383838;border-left:1px solid #383838;box-shadow:inset 1px 1px 0 #7a7a7a"></div>
<div class="t" style="left:505px;top:452.4px;width:31px;text-align:center;color:#101010;font-size:10.5px;line-height:10px;letter-spacing:-0.55px">247,9</div>
<div class="sb" style="left:535.5px;top:451.1px;width:10.0px;height:12.9px"></div>
<div class="ar" style="left:539.0px;top:454.6px;border-right:3px solid #101010"></div>
<div class="sb" style="left:545.5px;top:451.1px;width:10.0px;height:12.9px"></div>
<div class="ar" style="left:549.5px;top:454.6px;border-left:3px solid #101010"></div>
<div class="abs" style="left:561.5px;top:451.1px;width:25.5px;height:12.9px;background:#fff;border-top:1px solid #383838;border-left:1px solid #383838;box-shadow:inset 1px 1px 0 #7a7a7a"></div>
<div class="t" style="left:562.5px;top:452.4px;width:25px;text-align:center;color:#101010;font-size:10.5px;line-height:10px;letter-spacing:-0.55px">-45</div>
<div class="sb" style="left:587.0px;top:451.1px;width:9.7px;height:12.9px"></div>
<div class="ar" style="left:590.5px;top:454.6px;border-right:3px solid #101010"></div>
<div class="sb" style="left:596.7px;top:451.1px;width:9.7px;height:12.9px"></div>
<div class="ar" style="left:600.7px;top:454.6px;border-left:3px solid #101010"></div>
<div class="abs" style="left:613px;top:451.1px;width:25.5px;height:12.9px;background:#fff;border-top:1px solid #383838;border-left:1px solid #383838;box-shadow:inset 1px 1px 0 #7a7a7a"></div>
<div class="t" style="left:614px;top:452.4px;width:25px;text-align:center;color:#101010;font-size:10.5px;line-height:10px;letter-spacing:-0.55px">1/70</div>
<div class="sb" style="left:638.5px;top:451.1px;width:9.7px;height:12.9px"></div>
<div class="ar" style="left:642.0px;top:454.6px;border-right:3px solid #101010"></div>
<div class="sb" style="left:648.2px;top:451.1px;width:9.7px;height:12.9px"></div>
<div class="ar" style="left:652.2px;top:454.6px;border-left:3px solid #101010"></div>
<div class="abs" style="left:504px;top:463.9px;width:31.5px;height:12.9px;background:#fff;border-top:1px solid #383838;border-left:1px solid #383838;box-shadow:inset 1px 1px 0 #7a7a7a"></div>
<div class="t" style="left:505px;top:465.2px;width:31px;text-align:center;color:#101010;font-size:10.5px;line-height:10px;letter-spacing:-0.55px">247,9</div>
<div class="sb" style="left:535.5px;top:463.9px;width:10.0px;height:12.9px"></div>
<div class="ar" style="left:539.0px;top:467.4px;border-right:3px solid #101010"></div>
<div class="sb" style="left:545.5px;top:463.9px;width:10.0px;height:12.9px"></div>
<div class="ar" style="left:549.5px;top:467.4px;border-left:3px solid #101010"></div>
<div class="abs" style="left:561.5px;top:463.9px;width:25.5px;height:12.9px;background:#fff;border-top:1px solid #383838;border-left:1px solid #383838;box-shadow:inset 1px 1px 0 #7a7a7a"></div>
<div class="t" style="left:562.5px;top:465.2px;width:25px;text-align:center;color:#101010;font-size:10.5px;line-height:10px;letter-spacing:-0.55px">-45</div>
<div class="sb" style="left:587.0px;top:463.9px;width:9.7px;height:12.9px"></div>
<div class="ar" style="left:590.5px;top:467.4px;border-right:3px solid #101010"></div>
<div class="sb" style="left:596.7px;top:463.9px;width:9.7px;height:12.9px"></div>
<div class="ar" style="left:600.7px;top:467.4px;border-left:3px solid #101010"></div>
<div class="abs" style="left:613px;top:463.9px;width:25.5px;height:12.9px;background:#fff;border-top:1px solid #383838;border-left:1px solid #383838;box-shadow:inset 1px 1px 0 #7a7a7a"></div>
<div class="t" style="left:614px;top:465.2px;width:25px;text-align:center;color:#101010;font-size:10.5px;line-height:10px;letter-spacing:-0.55px">1/70</div>
<div class="sb" style="left:638.5px;top:463.9px;width:9.7px;height:12.9px"></div>
<div class="ar" style="left:642.0px;top:467.4px;border-right:3px solid #101010"></div>
<div class="sb" style="left:648.2px;top:463.9px;width:9.7px;height:12.9px"></div>
<div class="ar" style="left:652.2px;top:467.4px;border-left:3px solid #101010"></div>
<div class="abs" style="left:504px;top:476.8px;width:31.5px;height:12.9px;background:#fff;border-top:1px solid #383838;border-left:1px solid #383838;box-shadow:inset 1px 1px 0 #7a7a7a"></div>
<div class="t" style="left:505px;top:478.1px;width:31px;text-align:center;color:#101010;font-size:10.5px;line-height:10px;letter-spacing:-0.55px">247,9</div>
<div class="sb" style="left:535.5px;top:476.8px;width:10.0px;height:12.9px"></div>
<div class="ar" style="left:539.0px;top:480.3px;border-right:3px solid #101010"></div>
<div class="sb" style="left:545.5px;top:476.8px;width:10.0px;height:12.9px"></div>
<div class="ar" style="left:549.5px;top:480.3px;border-left:3px solid #101010"></div>
<div class="abs" style="left:561.5px;top:476.8px;width:25.5px;height:12.9px;background:#fff;border-top:1px solid #383838;border-left:1px solid #383838;box-shadow:inset 1px 1px 0 #7a7a7a"></div>
<div class="t" style="left:562.5px;top:478.1px;width:25px;text-align:center;color:#101010;font-size:10.5px;line-height:10px;letter-spacing:-0.55px">-45</div>
<div class="sb" style="left:587.0px;top:476.8px;width:9.7px;height:12.9px"></div>
<div class="ar" style="left:590.5px;top:480.3px;border-right:3px solid #101010"></div>
<div class="sb" style="left:596.7px;top:476.8px;width:9.7px;height:12.9px"></div>
<div class="ar" style="left:600.7px;top:480.3px;border-left:3px solid #101010"></div>
<div class="abs" style="left:613px;top:476.8px;width:25.5px;height:12.9px;background:#fff;border-top:1px solid #383838;border-left:1px solid #383838;box-shadow:inset 1px 1px 0 #7a7a7a"></div>
<div class="t" style="left:614px;top:478.1px;width:25px;text-align:center;color:#101010;font-size:10.5px;line-height:10px;letter-spacing:-0.55px">1/70</div>
<div class="sb" style="left:638.5px;top:476.8px;width:9.7px;height:12.9px"></div>
<div class="ar" style="left:642.0px;top:480.3px;border-right:3px solid #101010"></div>
<div class="sb" style="left:648.2px;top:476.8px;width:9.7px;height:12.9px"></div>
<div class="ar" style="left:652.2px;top:480.3px;border-left:3px solid #101010"></div>
<div class="abs" style="left:504px;top:489.7px;width:31.5px;height:12.9px;background:#fff;border-top:1px solid #383838;border-left:1px solid #383838;box-shadow:inset 1px 1px 0 #7a7a7a"></div>
<div class="t" style="left:505px;top:491.0px;width:31px;text-align:center;color:#101010;font-size:10.5px;line-height:10px;letter-spacing:-0.55px">10015</div>
<div class="sb" style="left:535.5px;top:489.7px;width:10.0px;height:12.9px"></div>
<div class="ar" style="left:539.0px;top:493.2px;border-right:3px solid #101010"></div>
<div class="sb" style="left:545.5px;top:489.7px;width:10.0px;height:12.9px"></div>
<div class="ar" style="left:549.5px;top:493.2px;border-left:3px solid #101010"></div>
<div class="abs" style="left:561.5px;top:489.7px;width:25.5px;height:12.9px;background:#fff;border-top:1px solid #383838;border-left:1px solid #383838;box-shadow:inset 1px 1px 0 #7a7a7a"></div>
<div class="t" style="left:562.5px;top:491.0px;width:25px;text-align:center;color:#101010;font-size:10.5px;line-height:10px;letter-spacing:-0.55px">-45</div>
<div class="sb" style="left:587.0px;top:489.7px;width:9.7px;height:12.9px"></div>
<div class="ar" style="left:590.5px;top:493.2px;border-right:3px solid #101010"></div>
<div class="sb" style="left:596.7px;top:489.7px;width:9.7px;height:12.9px"></div>
<div class="ar" style="left:600.7px;top:493.2px;border-left:3px solid #101010"></div>
<div class="abs" style="left:613px;top:489.7px;width:25.5px;height:12.9px;background:#fff;border-top:1px solid #383838;border-left:1px solid #383838;box-shadow:inset 1px 1px 0 #7a7a7a"></div>
<div class="t" style="left:614px;top:491.0px;width:25px;text-align:center;color:#101010;font-size:10.5px;line-height:10px;letter-spacing:-0.55px">1/20</div>
<div class="sb" style="left:638.5px;top:489.7px;width:9.7px;height:12.9px"></div>
<div class="ar" style="left:642.0px;top:493.2px;border-right:3px solid #101010"></div>
<div class="sb" style="left:648.2px;top:489.7px;width:9.7px;height:12.9px"></div>
<div class="ar" style="left:652.2px;top:493.2px;border-left:3px solid #101010"></div>
<div class="t b" style="left:505.70000000000005px;top:503.5px;width:30px;text-align:center;font-size:8px;line-height:8px;letter-spacing:-0.1px;color:#202020;font-family:'Liberation Serif'">Freq</div>
<div class="t b" style="left:563px;top:503.5px;width:30px;text-align:center;font-size:8px;line-height:8px;letter-spacing:-0.1px;color:#202020;font-family:'Liberation Serif'">Gain</div>
<div class="t b" style="left:611.3px;top:503.5px;width:30px;text-align:center;font-size:8px;line-height:8px;letter-spacing:-0.1px;color:#202020;font-family:'Liberation Serif'">Q</div>
<div class="etch" style="left:670px;top:340px;width:166px;height:130px"></div>
<div class="t" style="left:676.4px;top:349.9px;letter-spacing:0;transform:scaleX(0.857);transform-origin:0 0">Num notch automatic</div>
<div class="abs" style="left:760.0px;top:348.4px;width:13px;height:10.5px;background:#dedede;border-right:1.5px solid #484848;border-bottom:1.5px solid #606060;box-shadow:inset 1px 1px 0 #f8f8f8"></div>
<div class="ar" style="left:764.5px;top:350.9px;border-right:3px solid #101010"></div>
<div class="abs" style="left:772.5px;top:348.4px;width:13px;height:10.5px;background:#dedede;border-right:1.5px solid #484848;border-bottom:1.5px solid #606060;box-shadow:inset 1px 1px 0 #f8f8f8"></div>
<div class="ar" style="left:777.5px;top:350.9px;border-left:3px solid #101010"></div>
<div class="t b" style="left:777.8px;top:349.9px;width:60px;text-align:center;font-size:10px;letter-spacing:-0.1px;color:#0a0a0a">8</div>
<div class="t" style="left:676.4px;top:369.1px;letter-spacing:0;transform:scaleX(0.857);transform-origin:0 0">Q notch automatic</div>
<div class="abs" style="left:760.0px;top:367.6px;width:13px;height:10.5px;background:#dedede;border-right:1.5px solid #484848;border-bottom:1.5px solid #606060;box-shadow:inset 1px 1px 0 #f8f8f8"></div>
<div class="ar" style="left:764.5px;top:370.1px;border-right:3px solid #101010"></div>
<div class="abs" style="left:772.5px;top:367.6px;width:13px;height:10.5px;background:#dedede;border-right:1.5px solid #484848;border-bottom:1.5px solid #606060;box-shadow:inset 1px 1px 0 #f8f8f8"></div>
<div class="ar" style="left:777.5px;top:370.1px;border-left:3px solid #101010"></div>
<div class="t b" style="left:778px;top:369.1px;width:60px;text-align:center;font-size:10px;letter-spacing:-0.1px;color:#0a0a0a">1/70</div>
<div class="t" style="left:676.4px;top:388.3px;letter-spacing:0;transform:scaleX(0.857);transform-origin:0 0">Attenuation notch</div>
<div class="abs" style="left:760.0px;top:386.8px;width:13px;height:10.5px;background:#dedede;border-right:1.5px solid #484848;border-bottom:1.5px solid #606060;box-shadow:inset 1px 1px 0 #f8f8f8"></div>
<div class="ar" style="left:764.5px;top:389.3px;border-right:3px solid #101010"></div>
<div class="abs" style="left:772.5px;top:386.8px;width:13px;height:10.5px;background:#dedede;border-right:1.5px solid #484848;border-bottom:1.5px solid #606060;box-shadow:inset 1px 1px 0 #f8f8f8"></div>
<div class="ar" style="left:777.5px;top:389.3px;border-left:3px solid #101010"></div>
<div class="t b" style="left:781px;top:388.3px;width:60px;text-align:center;font-size:10px;letter-spacing:-0.1px;color:#0a0a0a">Variable</div>
<div class="t" style="left:676.4px;top:407.5px;letter-spacing:0;transform:scaleX(0.857);transform-origin:0 0">Release notch</div>
<div class="abs" style="left:760.0px;top:406.0px;width:13px;height:10.5px;background:#dedede;border-right:1.5px solid #484848;border-bottom:1.5px solid #606060;box-shadow:inset 1px 1px 0 #f8f8f8"></div>
<div class="ar" style="left:764.5px;top:408.5px;border-right:3px solid #101010"></div>
<div class="abs" style="left:772.5px;top:406.0px;width:13px;height:10.5px;background:#dedede;border-right:1.5px solid #484848;border-bottom:1.5px solid #606060;box-shadow:inset 1px 1px 0 #f8f8f8"></div>
<div class="ar" style="left:777.5px;top:408.5px;border-left:3px solid #101010"></div>
<div class="t b" style="left:781.3px;top:407.5px;width:60px;text-align:center;font-size:10px;letter-spacing:-0.1px;color:#0a0a0a">Fast</div>
<div class="t" style="left:676.4px;top:426.7px;letter-spacing:0;transform:scaleX(0.857);transform-origin:0 0">Mode search</div>
<div class="abs" style="left:760.0px;top:425.2px;width:13px;height:10.5px;background:#dedede;border-right:1.5px solid #484848;border-bottom:1.5px solid #606060;box-shadow:inset 1px 1px 0 #f8f8f8"></div>
<div class="ar" style="left:764.5px;top:427.7px;border-right:3px solid #101010"></div>
<div class="abs" style="left:772.5px;top:425.2px;width:13px;height:10.5px;background:#dedede;border-right:1.5px solid #484848;border-bottom:1.5px solid #606060;box-shadow:inset 1px 1px 0 #f8f8f8"></div>
<div class="ar" style="left:777.5px;top:427.7px;border-left:3px solid #101010"></div>
<div class="t b" style="left:784.4px;top:426.7px;width:60px;text-align:center;font-size:10px;letter-spacing:-0.1px;color:#0a0a0a">Fast</div>
<div class="t" style="left:676.4px;top:445.9px;letter-spacing:0;transform:scaleX(0.857);transform-origin:0 0">Sensitivity</div>
<div class="abs" style="left:725.5px;top:445.8px;width:68.5px;height:5px;border-top:1.6px solid #404040;border-left:1px solid #606060;border-bottom:1px solid #f8f8f8;background:#d4d4d4"></div>
<svg class="abs" style="left:0;top:0" width="1024" height="614"><rect x="756" y="445" width="4" height="7" fill="#d8d8d8"/><path d="M757.5 446v4l-1 2" fill="none" stroke="#303030" stroke-width="1.2"/></svg>
<svg class="abs" style="left:0;top:0" width="1024" height="614"><rect x="729.5" y="454.3" width="1.2" height="2" fill="#303030"/><rect x="734.0" y="454.3" width="1.2" height="2" fill="#303030"/><rect x="738.6" y="454.3" width="1.2" height="2" fill="#303030"/><rect x="743.1" y="454.3" width="1.2" height="2" fill="#303030"/><rect x="747.7" y="454.3" width="1.2" height="2" fill="#303030"/><rect x="752.2" y="454.3" width="1.2" height="2" fill="#303030"/><rect x="756.8" y="454.3" width="1.2" height="2" fill="#303030"/><rect x="761.4" y="454.3" width="1.2" height="2" fill="#303030"/><rect x="765.9" y="454.3" width="1.2" height="2" fill="#303030"/><rect x="770.5" y="454.3" width="1.2" height="2" fill="#303030"/><rect x="775.0" y="454.3" width="1.2" height="2" fill="#303030"/><rect x="779.5" y="454.3" width="1.2" height="2" fill="#303030"/><rect x="784.1" y="454.3" width="1.2" height="2" fill="#303030"/><rect x="788.6" y="454.3" width="1.2" height="2" fill="#303030"/><path d="M725 455.3l2-1.5v3z" fill="#101010"/><rect x="726" y="454.5" width="2" height="2" fill="#101010"/><rect x="792" y="453.5" width="1.5" height="3" fill="#303030"/></svg>
<div class="abs" style="left:798px;top:445px;width:33px;height:12px;background:#fcfcfc"></div>
<div class="t" style="left:798px;top:446.5px;width:33px;text-align:center;letter-spacing:0;font-size:10px">8</div>
<div class="etch" style="left:670px;top:475px;width:166px;height:40px"></div>
<div class="btn" style="left:676.5px;top:482.5px;width:71px;height:26.5px"></div>
<div class="t" style="left:676.5px;top:486.5px;width:71px;text-align:center;letter-spacing:0;transform:scaleX(0.86);transform-origin:50% 0">Reset Notch</div>
<div class="t" style="left:676.5px;top:496.5px;width:71px;text-align:center;letter-spacing:0;transform:scaleX(0.86);transform-origin:50% 0">Manual</div>
<div class="btn" style="left:760px;top:482.5px;width:71px;height:26.5px"></div>
<div class="t" style="left:760px;top:486.5px;width:71px;text-align:center;letter-spacing:0;transform:scaleX(0.86);transform-origin:50% 0">Reset Notch</div>
<div class="t" style="left:760px;top:496.5px;width:71px;text-align:center;letter-spacing:0;transform:scaleX(0.86);transform-origin:50% 0">Automatic</div>
</body></html>
